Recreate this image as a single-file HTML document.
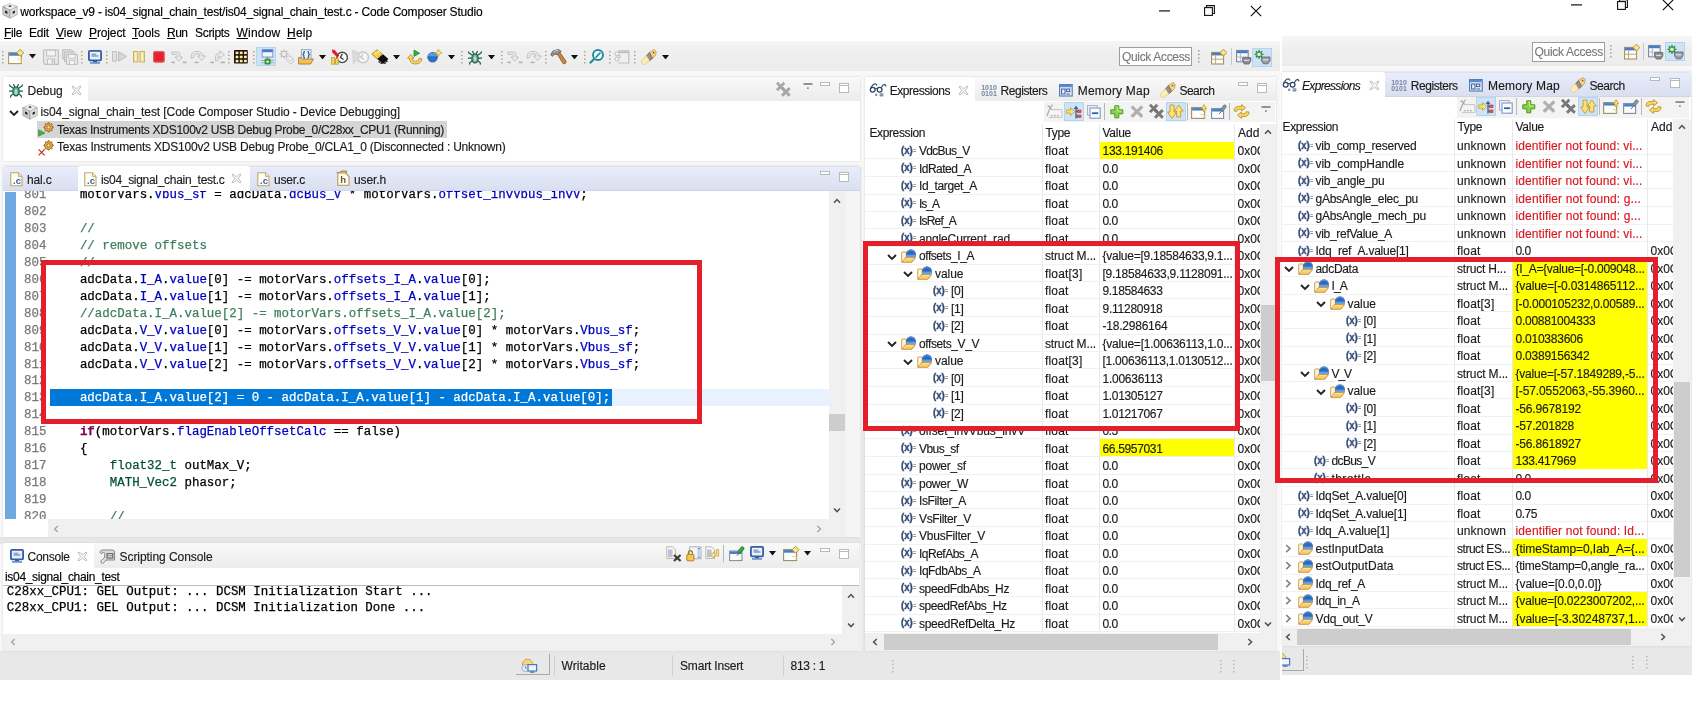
<!DOCTYPE html>
<html lang="en"><head><meta charset="utf-8"><title>workspace_v9 - Code Composer Studio</title>
<style>
html,body{margin:0;padding:0;background:#fff}
body{width:1697px;height:702px;position:relative;overflow:hidden;font-family:"Liberation Sans",sans-serif;font-size:12px;color:#1b1b1b}
div,span,svg,section,header,footer,nav,main{position:absolute;display:block}
#app{left:0;top:0;width:1697px;height:702px;will-change:transform}
.t{white-space:pre;line-height:16px;font-family:"Liberation Sans",sans-serif;font-size:12px;-webkit-text-stroke:0.15px}
.m{white-space:pre;line-height:16px;font-family:"Liberation Mono",monospace;font-size:12.45px;-webkit-text-stroke:0.25px}
.tabbar{background:linear-gradient(#f9f9f9,#ececec);border-radius:4px 4px 0 0}
.tabbar.act{background:linear-gradient(#e9edfc,#d9dff0);box-shadow:inset 0 -1px 0 #cfd5e4,inset 0 1px 0 #dfe2ea}
.tab{background:#fff;border-radius:3px 3px 0 0}
.hl{background:#cde4f7;outline:1px solid #b5d3ee;outline-offset:-1px}
.gl{background:#efefef}
.cl{background:#e3e3e3}
.yl{background:#ffff00}
.sb{background:#f0f0f0}
.th{background:#cdcdcd}
.red{border:5px solid #e21f2b;box-sizing:border-box}

</style></head>
<body>
<div id="app">
<section aria-label="Window frames" style="left:0;top:0">
<main style="left:0;top:0;width:1280px;height:680px;background:#f8f8f8">
<header style="left:0;top:0;width:1280px;height:41px;background:#fff"></header>
<nav style="left:0;top:41px;width:1280px;height:30px;background:linear-gradient(#f5f5f5,#efefef 40%,#ececec)"></nav>
<footer style="left:0;top:651px;width:1280px;height:29px;background:#e8e8e8"></footer>
</main>
<main style="left:1282px;top:0;width:410px;height:675px;background:#f7f7f7">
<header style="left:0;top:0;width:410px;height:36px;background:#fff"></header>
<nav style="left:0;top:36px;width:410px;height:30px;background:linear-gradient(#f5f5f5,#efefef 40%,#ececec)"></nav>
<footer style="left:0;top:645px;width:410px;height:30px;background:#e8e8e8"></footer>
</main>
</section>
<section aria-label="View containers" style="left:0;top:0">
<div style="left:0px;top:537px;width:861px;height:6.5px;background:#e7e7e7;"></div>
<div style="left:861px;top:430px;width:4px;height:221px;background:#e9e9e9;"></div>
<div style="left:860px;top:166px;width:2px;height:264px;background:#ededed;"></div>
<div style="left:3px;top:77px;width:857px;height:84px;background:#fff;box-shadow:0 0 2px #d0d0d0;"></div>
<div class="tabbar" style="left:3px;top:77px;width:857px;height:24px"></div>
<div class="tab" style="left:3px;top:77px;width:85px;height:24px"></div>
<div style="left:37px;top:121px;width:410px;height:17px;background:#d5d5d5;"></div>
<div style="left:3px;top:165.5px;width:857px;height:371.5px;background:#fff;box-shadow:0 0 2px #d0d0d0;"></div>
<div class="tabbar act" style="left:3px;top:165.5px;width:857px;height:25px"></div>
<div class="tab" style="left:78px;top:166px;width:172px;height:25px"></div>
<div style="left:5px;top:192px;width:11px;height:327px;background:#70a9e0;"></div>
<div style="left:50px;top:389px;width:779px;height:17px;background:#e8f2fe;"></div>
<div style="left:50px;top:389px;width:562px;height:17px;background:#0078d7;"></div>
<div style="left:829px;top:191px;width:17px;height:328px;background:#f0f0f0;"></div>
<div style="left:829px;top:414px;width:16px;height:17px;background:#cdcdcd;"></div>
<div style="left:48px;top:519px;width:798px;height:18px;background:#f0f0f0;"></div>
<div style="left:846px;top:191px;width:14px;height:346px;background:#f5f5f5;"></div>
<div style="left:3px;top:543px;width:856px;height:108px;background:#fff;box-shadow:0 0 2px #d0d0d0;"></div>
<div class="tabbar" style="left:3px;top:543px;width:856px;height:25px"></div>
<div class="tab" style="left:3px;top:543px;width:91px;height:25px"></div>
<div style="left:3px;top:585px;width:856px;height:1px;background:#b9b9b9;"></div>
<div style="left:842px;top:586px;width:17px;height:48px;background:#f0f0f0;"></div>
<div style="left:3px;top:634px;width:856px;height:17px;background:#f0f0f0;"></div>
<div style="left:865px;top:77px;width:411px;height:574px;background:#fff;box-shadow:0 0 2px #d0d0d0;"></div>
<div class="tabbar" style="left:865px;top:77px;width:411px;height:24px"></div>
<div class="tab" style="left:865px;top:77px;width:110px;height:24px"></div>
<div style="left:1282px;top:72px;width:409px;height:573.5px;background:#fff;box-shadow:0 0 2px #d0d0d0;"></div>
<div class="tabbar act" style="left:1282px;top:72px;width:409px;height:25px"></div>
<div class="tab" style="left:1282px;top:72px;width:103px;height:25px"></div>
</section>
<section aria-label="Title bar, menu bar and toolbars" style="left:0;top:0">
<svg style="left:1.5px;top:3px" width="16" height="16" viewBox="0 0 16 16"><path d="M8 0.6 L15.2 3.6 L8 7 L0.8 3.6 Z" fill="#e9e9e9" stroke="#9a9a9a" stroke-width="0.6"/><path d="M0.8 3.6 L8 7 V15.2 L0.8 11.6 Z" fill="#c9c9c9" stroke="#8f8f8f" stroke-width="0.6"/><path d="M15.2 3.6 L8 7 V15.2 L15.2 11.6 Z" fill="#dedede" stroke="#9a9a9a" stroke-width="0.6"/><path d="M6.2 3 L8 2.2 L9.8 3 L8 3.9 Z" fill="#222"/><path d="M3 7.4 L5.4 8.6 V11 L3 9.8 Z" fill="#222"/><path d="M10.6 8.6 L13 7.4 V9.8 L10.6 11 Z" fill="#2a2a2a"/><path d="M4.4 2.6 L8 1 L11.6 2.6 M4.4 4.6 L8 6 L11.6 4.6" fill="none" stroke="#fff" stroke-width="0.7" opacity=".8"/></svg>
<span class="t" style="left:20.3px;top:3.90px;color:#000;letter-spacing:-0.189px;">workspace_v9 - is04_signal_chain_test/is04_signal_chain_test.c - Code Composer Studio</span>
<svg style="left:1158.5px;top:10px" width="11" height="2" viewBox="0 0 11 2"><rect x="0" y="0.3" width="11" height="1.2" fill="#111"/></svg><svg style="left:1203.5px;top:5px" width="11" height="11" viewBox="0 0 11 11"><path d="M2.5 2.5 V0.6 H10.4 V8.5 H8.5" fill="none" stroke="#111" stroke-width="1.1"/><rect x="0.6" y="2.6" width="7.8" height="7.8" fill="none" stroke="#111" stroke-width="1.1"/></svg><svg style="left:1250px;top:5px" width="12" height="12" viewBox="0 0 12 12"><path d="M0.8 0.8 L11.2 11.2 M11.2 0.8 L0.8 11.2" stroke="#111" stroke-width="1.2"/></svg>
<svg style="left:1571.0px;top:4px" width="11" height="2" viewBox="0 0 11 2"><rect x="0" y="0.3" width="11" height="1.2" fill="#111"/></svg><svg style="left:1616.5px;top:-1px" width="11" height="11" viewBox="0 0 11 11"><path d="M2.5 2.5 V0.6 H10.4 V8.5 H8.5" fill="none" stroke="#111" stroke-width="1.1"/><rect x="0.6" y="2.6" width="7.8" height="7.8" fill="none" stroke="#111" stroke-width="1.1"/></svg><svg style="left:1662px;top:-1px" width="12" height="12" viewBox="0 0 12 12"><path d="M0.8 0.8 L11.2 11.2 M11.2 0.8 L0.8 11.2" stroke="#111" stroke-width="1.2"/></svg>
<span class="t" style="left:4px;top:24.60px;color:#000;letter-spacing:-0.336px;"><u>F</u>ile</span>
<span class="t" style="left:29px;top:24.60px;color:#000;letter-spacing:-0.172px;">Edit</span>
<span class="t" style="left:56px;top:24.60px;color:#000;letter-spacing:0.051px;"><u>V</u>iew</span>
<span class="t" style="left:89px;top:24.60px;color:#000;letter-spacing:-0.123px;"><u>P</u>roject</span>
<span class="t" style="left:132px;top:24.60px;color:#000;"><u>T</u>ools</span>
<span class="t" style="left:167px;top:24.60px;color:#000;letter-spacing:-0.505px;"><u>R</u>un</span>
<span class="t" style="left:195px;top:24.60px;color:#000;letter-spacing:-0.312px;">Scripts</span>
<span class="t" style="left:236.5px;top:24.60px;color:#000;letter-spacing:0.219px;"><u>W</u>indow</span>
<span class="t" style="left:287px;top:24.60px;color:#000;letter-spacing:0.203px;"><u>H</u>elp</span>
<svg style="left:1.5999999999999999px;top:50.5px" width="2" height="13" viewBox="0 0 2 13"><rect x="0" y="0.0" width="1.6" height="1.4" fill="#a8a8a8"/><rect x="0" y="3.7" width="1.6" height="1.4" fill="#a8a8a8"/><rect x="0" y="7.4" width="1.6" height="1.4" fill="#a8a8a8"/><rect x="0" y="11.1" width="1.6" height="1.4" fill="#a8a8a8"/></svg><svg style="left:7.8px;top:49.0px" width="16" height="16" viewBox="0 0 16 16"><rect x="0.6" y="3.6" width="12.8" height="11" fill="#fdfdfd" stroke="#b09a62" stroke-width="1.1"/><rect x="1.1" y="4.1" width="11.8" height="2.6" fill="#3f7fc4"/><path d="M9 10 H13 V14" fill="none" stroke="#ecd58a" stroke-width="1"/><path d="M12.2 0.3 L15.7 3.8 L12.2 7.3 L8.7 3.8 Z" fill="#fbe58a" stroke="#b08a28" stroke-width="0.9"/></svg><svg style="left:29px;top:54.0px" width="7" height="4.5" viewBox="0 0 7 4.5"><path d="M0 0 H7 L3.5 4.5 Z" fill="#111"/></svg><svg style="left:42.5px;top:49.0px" width="16" height="16" viewBox="0 0 16 16"><path d="M0.6 1 H15.4 V15.4 H2.2 L0.6 13.8 Z" fill="#e9e9e9" stroke="#bdbdbd" stroke-width="1.1"/><rect x="3.6" y="1.2" width="8.8" height="5.8" fill="#f4f4f4" stroke="#bdbdbd" stroke-width="0.9"/><rect x="4.6" y="10" width="7" height="5.2" fill="#f4f4f4" stroke="#bdbdbd" stroke-width="0.9"/><rect x="8.6" y="11" width="1.8" height="3.4" fill="#bdbdbd"/></svg><svg style="left:62px;top:49.0px" width="16" height="16" viewBox="0 0 16 16"><path d="M0.6 0.8 H9.6 L12.6 3.6 V10 H0.6 Z" fill="#e2e2e2" stroke="#bdbdbd"/><path d="M2.4 3 H11.4 L14.2 5.8 V12.4 H2.4 Z" fill="#dedede" stroke="#bdbdbd"/><path d="M4.4 5.4 H15.4 V15.4 H4.4 Z" fill="#e9e9e9" stroke="#bdbdbd"/><rect x="6.6" y="5.6" width="6.6" height="3.6" fill="#f5f5f5" stroke="#bdbdbd" stroke-width="0.8"/><rect x="7.4" y="11.4" width="5" height="4" fill="#f5f5f5" stroke="#bdbdbd" stroke-width="0.8"/></svg><svg style="left:80.8px;top:50.5px" width="2" height="13" viewBox="0 0 2 13"><rect x="0" y="0.0" width="1.6" height="1.4" fill="#b3a58a"/><rect x="0" y="3.7" width="1.6" height="1.4" fill="#b3a58a"/><rect x="0" y="7.4" width="1.6" height="1.4" fill="#b3a58a"/><rect x="0" y="11.1" width="1.6" height="1.4" fill="#b3a58a"/></svg><svg style="left:87.8px;top:49.5px" width="14" height="14" viewBox="0 0 14 14"><rect x="0.9" y="0.9" width="12.2" height="9.4" rx="1" fill="#e9eef8" stroke="#2f5fa8" stroke-width="1.8"/><rect x="3.6" y="3.6" width="4.6" height="1.8" fill="#8ea2c6"/><rect x="3.6" y="5.2" width="6.8" height="1.6" fill="#8ea2c6"/><rect x="5" y="11" width="4" height="1.4" fill="#2f5fa8"/><rect x="2" y="12.2" width="10" height="1.5" fill="#5b87c8"/></svg><svg style="left:105.7px;top:50.5px" width="2" height="13" viewBox="0 0 2 13"><rect x="0" y="0.0" width="1.6" height="1.4" fill="#b3a58a"/><rect x="0" y="3.7" width="1.6" height="1.4" fill="#b3a58a"/><rect x="0" y="7.4" width="1.6" height="1.4" fill="#b3a58a"/><rect x="0" y="11.1" width="1.6" height="1.4" fill="#b3a58a"/></svg><svg style="left:112px;top:51.0px" width="16" height="11" viewBox="0 0 16 11"><rect x="0.6" y="0.6" width="3.6" height="9.6" fill="#e6e6e6" stroke="#bdbdbd"/><path d="M6.4 0.6 L14.6 5.4 L6.4 10.2 Z" fill="#d6d6d6" stroke="#bdbdbd"/></svg><svg style="left:133px;top:51.0px" width="12" height="11.5" viewBox="0 0 12 11.5"><rect x="0.5" y="0.5" width="4.4" height="10.4" fill="#f1e39a" stroke="#c8b060"/><rect x="7" y="0.5" width="4.4" height="10.4" fill="#f1e39a" stroke="#c8b060"/><rect x="2" y="1.2" width="1.4" height="9" fill="#fbf4c8"/><rect x="8.5" y="1.2" width="1.4" height="9" fill="#fbf4c8"/></svg><svg style="left:152.8px;top:50.7px" width="12" height="12" viewBox="0 0 12 12"><rect x="0.6" y="0.6" width="10.6" height="10.6" rx="1.4" fill="#e8202c" stroke="#d8636a" stroke-width="1.2"/></svg><svg style="left:170.5px;top:50.0px" width="16" height="14" viewBox="0 0 16 14"><path d="M1 2 H6.5 Q9 2 9 5 V7 H11.6 L7.8 11.4 L4 7 H6.6 V5 Q6.6 4.4 6 4.4 H1 Z" fill="#ececec" stroke="#bdbdbd" stroke-width="0.9"/><rect x="0.4" y="11.6" width="3.4" height="1.6" fill="#b0b0b0"/><rect x="11.6" y="11.6" width="3.8" height="1.6" fill="#b0b0b0"/></svg><svg style="left:190px;top:50.0px" width="16" height="14" viewBox="0 0 16 14"><path d="M1 8 Q1 1.4 7 1.4 Q12.4 1.4 12.6 6 H15.4 L11.6 10.6 L7.6 6 H10.2 Q10 3.8 7 3.8 Q3.6 3.8 3.6 8 Z" fill="#ececec" stroke="#bdbdbd" stroke-width="0.9"/><rect x="4.6" y="11.6" width="4" height="1.6" fill="#b0b0b0"/></svg><svg style="left:209.5px;top:50.0px" width="16" height="14" viewBox="0 0 16 14"><path d="M5.6 11 V6.6 Q5.6 3.4 8.6 3.4 H9.8 V0.8 L14.4 4.6 L9.8 8.6 V6 H8.8 Q8 6 8 7 V11 Z" fill="#ececec" stroke="#bdbdbd" stroke-width="0.9"/><rect x="0.4" y="11.6" width="3.6" height="1.6" fill="#b0b0b0"/><rect x="10.6" y="11.6" width="4.4" height="1.6" fill="#b0b0b0"/></svg><svg style="left:227.89999999999998px;top:50.5px" width="2" height="13" viewBox="0 0 2 13"><rect x="0" y="0.0" width="1.6" height="1.4" fill="#b3a58a"/><rect x="0" y="3.7" width="1.6" height="1.4" fill="#b3a58a"/><rect x="0" y="7.4" width="1.6" height="1.4" fill="#b3a58a"/><rect x="0" y="11.1" width="1.6" height="1.4" fill="#b3a58a"/></svg><svg style="left:233.6px;top:49.5px" width="14" height="14" viewBox="0 0 14 14"><rect x="0" y="0" width="13.8" height="13.6" rx="0.8" fill="#1d1308"/><rect x="1.6" y="1.6" width="2.8" height="2.5" fill="#fde9a8"/><rect x="1.6" y="5.7" width="2.8" height="2.5" fill="#fde9a8"/><rect x="1.6" y="9.8" width="2.8" height="2.5" fill="#fde9a8"/><rect x="5.8" y="1.6" width="2.8" height="2.5" fill="#fde9a8"/><rect x="5.8" y="5.7" width="2.8" height="2.5" fill="#fde9a8"/><rect x="5.8" y="9.8" width="2.8" height="2.5" fill="#fde9a8"/><rect x="10.0" y="1.6" width="2.8" height="2.5" fill="#fde9a8"/><rect x="10.0" y="5.7" width="2.8" height="2.5" fill="#fde9a8"/><rect x="10.0" y="9.8" width="2.8" height="2.5" fill="#fde9a8"/></svg><svg style="left:252.7px;top:50.5px" width="2" height="13" viewBox="0 0 2 13"><rect x="0" y="0.0" width="1.6" height="1.4" fill="#b3a58a"/><rect x="0" y="3.7" width="1.6" height="1.4" fill="#b3a58a"/><rect x="0" y="7.4" width="1.6" height="1.4" fill="#b3a58a"/><rect x="0" y="11.1" width="1.6" height="1.4" fill="#b3a58a"/></svg><div class="hl" style="left:256px;top:46.7px;width:20px;height:19px"></div><svg style="left:260.6px;top:49.0px" width="13" height="16" viewBox="0 0 13 16"><rect x="1.2" y="0.6" width="10.6" height="7.4" fill="#f2f6fc" stroke="#7d9ccc" stroke-width="1"/><rect x="1.2" y="0.6" width="10.6" height="2.6" fill="#4a7cc4"/><rect x="5.4" y="8" width="2.2" height="2.4" fill="#8e9cb4"/><rect x="0" y="11" width="13" height="1" fill="#a8a8a8"/><rect x="0" y="13.2" width="13" height="1" fill="#c0a8a8"/><rect x="3.6" y="9.8" width="6" height="5.8" rx="1" fill="#2c9a3c"/><rect x="5.4" y="11.6" width="2.4" height="2.2" fill="#d8f5c8"/></svg><svg style="left:278.6px;top:48.5px" width="16" height="16" viewBox="0 0 16 16"><path d="M5 5 L9.6 5.0" stroke="#bdbdbd" stroke-width="1.3"/><path d="M5 5 L0.4 5.0" stroke="#bdbdbd" stroke-width="1.3"/><path d="M5 5 L5.0 9.6" stroke="#bdbdbd" stroke-width="1.3"/><path d="M5 5 L5.0 0.4" stroke="#bdbdbd" stroke-width="1.3"/><path d="M5 5 L8.2 8.2" stroke="#bdbdbd" stroke-width="1.3"/><path d="M5 5 L1.8 8.2" stroke="#bdbdbd" stroke-width="1.3"/><path d="M5 5 L8.2 1.8" stroke="#bdbdbd" stroke-width="1.3"/><path d="M5 5 L1.8 1.8" stroke="#bdbdbd" stroke-width="1.3"/><circle cx="5" cy="5" r="2.6" fill="#f0f0f0" stroke="#bdbdbd"/><path d="M7.6 7.2 L11.4 7 L15.2 11.8 L11.8 15 L7.4 10.8 Z" fill="#f2f2f2" stroke="#c2c2c2"/><path d="M9.6 10.2 L11.4 12 L13.4 10.4" fill="none" stroke="#c2c2c2"/></svg><svg style="left:297.6px;top:48.5px" width="16" height="16" viewBox="0 0 16 16"><rect x="3.4" y="0.6" width="9.6" height="10" fill="#eef2f8" stroke="#9aa6b8"/><path d="M7 2.4 Q5.8 2.4 5.8 3.6 V4.8 L5 5.6 L5.8 6.4 V7.8 Q5.8 9 7 9" fill="none" stroke="#1f6a9c" stroke-width="1.3"/><path d="M9.4 2.4 Q10.6 2.4 10.6 3.6 V4.8 L11.4 5.6 L10.6 6.4 V7.8 Q10.6 9 9.4 9" fill="none" stroke="#1f6a9c" stroke-width="1.3"/><path d="M0.6 8.6 H3 L4 10 H15.4 L12.6 15 H0.6 Z" fill="#f3bf5c" stroke="#b8822e" stroke-linejoin="round"/></svg><svg style="left:319px;top:54.5px" width="7" height="4.5" viewBox="0 0 7 4.5"><path d="M0 0 H7 L3.5 4.5 Z" fill="#111"/></svg><svg style="left:331px;top:48.5px" width="17" height="16" viewBox="0 0 17 16"><circle cx="11.2" cy="8.4" r="5.2" fill="#fafafa" stroke="#4a4a4a" stroke-width="1.4"/><path d="M11.4 4.8 L9.4 8.6 L12.6 10.6" fill="none" stroke="#333" stroke-width="1.2"/><path d="M1 0.6 L3.6 1 L8.4 6.6 L6.4 8.6 L1.4 3.4 Z" fill="#e0182c"/><rect x="0.6" y="8.4" width="2.8" height="6.8" fill="#f4d668" stroke="#c09a28" stroke-width="0.8"/><rect x="4.4" y="9.6" width="2.8" height="5.6" fill="#f4d668" stroke="#c09a28" stroke-width="0.8"/></svg><svg style="left:351.6px;top:48.5px" width="17" height="16" viewBox="0 0 17 16"><circle cx="11" cy="8.4" r="5.4" fill="#f6f6f6" stroke="#c6c6c6" stroke-width="1.3"/><path d="M11 4.8 L9 8.6 L12.4 10.6" fill="none" stroke="#c6c6c6" stroke-width="1.2"/><path d="M0.6 1.4 L4.6 2.4 L9 8 L6.4 9.6 L7.4 13 L3.6 11.4 L1.6 15 L1 9 Z" fill="#dadada" stroke="#c8c8c8" stroke-width="0.6"/></svg><svg style="left:371px;top:48.5px" width="18" height="16" viewBox="0 0 18 16"><path d="M0.8 5 L6 0.8 L11.6 5.4 L6.2 10 Z" fill="#f3cf4e" stroke="#b88e1c" stroke-width="0.9"/><path d="M4 3.6 L5.4 5 M6.6 2 L8.4 3.8" stroke="#fff4b8" stroke-width="1.2"/><path d="M6.4 10 L12 5.2 L17.4 10 L12 15 Z" fill="#0c0c0c"/><path d="M7.6 12.4 L8.8 13.6 M9.6 13.6 L10.8 14.8 M13.4 14.8 L14.6 13.6 M15.2 13 L16.4 11.8" stroke="#0c0c0c" stroke-width="1.3"/></svg><svg style="left:393.3px;top:54.5px" width="7" height="4.5" viewBox="0 0 7 4.5"><path d="M0 0 H7 L3.5 4.5 Z" fill="#111"/></svg><svg style="left:406.8px;top:48.5px" width="16" height="16" viewBox="0 0 16 16"><path d="M7 1 L12.6 4.2 L7 7.4 Z" fill="#2fae4a" stroke="#1d8a36" stroke-width="0.8"/><path d="M3.8 5.4 L7 9.2 H5 Q5.4 12.4 8.6 12.4 Q12 12.4 12.6 9 L15 10 Q13.8 15 8.4 15 Q3 15 2.4 9.2 H0.6 Z" fill="#f7d36a" stroke="#c2912a" stroke-width="0.9" stroke-linejoin="round"/></svg><svg style="left:427.2px;top:48.9px" width="15" height="14" viewBox="0 0 15 14"><circle cx="5.6" cy="8.2" r="5.2" fill="#2f6fc4"/><ellipse cx="5.4" cy="6.6" rx="4.6" ry="2.6" fill="#5a9ae4"/><rect x="0.6" y="7.6" width="10" height="1" fill="#1d4f9c"/><path d="M11.4 0.2 L12.6 2.6 L15 3.8 L12.6 5 L11.4 7.4 L10.2 5 L7.8 3.8 L10.2 2.6 Z" fill="#fbe27a" stroke="#c79a2a" stroke-width="0.7"/></svg><svg style="left:447.6px;top:54.5px" width="7" height="4.5" viewBox="0 0 7 4.5"><path d="M0 0 H7 L3.5 4.5 Z" fill="#111"/></svg><svg style="left:460.8px;top:50.5px" width="2" height="13" viewBox="0 0 2 13"><rect x="0" y="0.0" width="1.6" height="1.4" fill="#b3a58a"/><rect x="0" y="3.7" width="1.6" height="1.4" fill="#b3a58a"/><rect x="0" y="7.4" width="1.6" height="1.4" fill="#b3a58a"/><rect x="0" y="11.1" width="1.6" height="1.4" fill="#b3a58a"/></svg><svg style="left:467.2px;top:49.5px" width="16" height="15" viewBox="0 0 16 15"><path d="M5.8 5.6 L2 3 L1.4 1.6 M5 8 L1 8 M5.6 10.4 L2.6 13 L2.8 14.6 M10.2 5.6 L14 3 L14.6 1.6 M11 8 L15 8 M10.4 10.4 L13.4 13 L13.2 14.6 M6.8 4 L5.4 1 M9.2 4 L10.6 1" fill="none" stroke="#1f5f58" stroke-width="1.25"/><ellipse cx="8" cy="8.4" rx="3.1" ry="4.5" fill="#6fb487" stroke="#1f5f58" stroke-width="1.3"/><ellipse cx="8" cy="8.8" rx="1.4" ry="2.5" fill="#b6e0a8"/></svg><svg style="left:488px;top:54.5px" width="7" height="4.5" viewBox="0 0 7 4.5"><path d="M0 0 H7 L3.5 4.5 Z" fill="#111"/></svg><svg style="left:500.7px;top:50.5px" width="2" height="13" viewBox="0 0 2 13"><rect x="0" y="0.0" width="1.6" height="1.4" fill="#b3a58a"/><rect x="0" y="3.7" width="1.6" height="1.4" fill="#b3a58a"/><rect x="0" y="7.4" width="1.6" height="1.4" fill="#b3a58a"/><rect x="0" y="11.1" width="1.6" height="1.4" fill="#b3a58a"/></svg><svg style="left:506.5px;top:50.0px" width="16" height="14" viewBox="0 0 16 14"><path d="M1 2 H6.5 Q9 2 9 5 V7 H11.6 L7.8 11.4 L4 7 H6.6 V5 Q6.6 4.4 6 4.4 H1 Z" fill="#ececec" stroke="#bdbdbd" stroke-width="0.9"/><rect x="0.4" y="11.6" width="3.4" height="1.6" fill="#b0b0b0"/><rect x="11.6" y="11.6" width="3.8" height="1.6" fill="#b0b0b0"/></svg><svg style="left:526px;top:50.0px" width="16" height="14" viewBox="0 0 16 14"><path d="M1 8 Q1 1.4 7 1.4 Q12.4 1.4 12.6 6 H15.4 L11.6 10.6 L7.6 6 H10.2 Q10 3.8 7 3.8 Q3.6 3.8 3.6 8 Z" fill="#ececec" stroke="#bdbdbd" stroke-width="0.9"/><rect x="4.6" y="11.6" width="4" height="1.6" fill="#b0b0b0"/></svg><svg style="left:544.8000000000001px;top:50.5px" width="2" height="13" viewBox="0 0 2 13"><rect x="0" y="0.0" width="1.6" height="1.4" fill="#b3a58a"/><rect x="0" y="3.7" width="1.6" height="1.4" fill="#b3a58a"/><rect x="0" y="7.4" width="1.6" height="1.4" fill="#b3a58a"/><rect x="0" y="11.1" width="1.6" height="1.4" fill="#b3a58a"/></svg><svg style="left:549.6px;top:48.5px" width="17" height="16" viewBox="0 0 17 16"><path d="M7 4.6 L9.6 3 L16 12.2 Q16.4 14.6 14 14.8 Q12.8 14.8 12.4 13.6 Z" fill="#c98544" stroke="#8a5622" stroke-width="0.8"/><path d="M0.6 5.6 L3.2 1.8 L9 0.4 L11.2 2.6 L9.6 3.6 L7.4 5.6 L4.2 5.4 L2.4 7.4 Z" fill="#8e9094" stroke="#5c5e62" stroke-width="0.8"/><path d="M3.6 2.4 L8.4 1.2" stroke="#c8cacc" stroke-width="1"/></svg><svg style="left:571px;top:54.5px" width="7" height="4.5" viewBox="0 0 7 4.5"><path d="M0 0 H7 L3.5 4.5 Z" fill="#111"/></svg><svg style="left:583.9000000000001px;top:50.5px" width="2" height="13" viewBox="0 0 2 13"><rect x="0" y="0.0" width="1.6" height="1.4" fill="#b3a58a"/><rect x="0" y="3.7" width="1.6" height="1.4" fill="#b3a58a"/><rect x="0" y="7.4" width="1.6" height="1.4" fill="#b3a58a"/><rect x="0" y="11.1" width="1.6" height="1.4" fill="#b3a58a"/></svg><svg style="left:589px;top:49.1px" width="16" height="15" viewBox="0 0 16 15"><circle cx="9" cy="6" r="5" fill="#fafcfc" stroke="#1f8a9c" stroke-width="1.9"/><path d="M5.4 9.8 L0.8 14.2" stroke="#1f8a9c" stroke-width="2.2"/><path d="M6.6 8.6 L11.4 3.6" stroke="#1f8a9c" stroke-width="1.6"/></svg><svg style="left:608.9000000000001px;top:50.5px" width="2" height="13" viewBox="0 0 2 13"><rect x="0" y="0.0" width="1.6" height="1.4" fill="#b3a58a"/><rect x="0" y="3.7" width="1.6" height="1.4" fill="#b3a58a"/><rect x="0" y="7.4" width="1.6" height="1.4" fill="#b3a58a"/><rect x="0" y="11.1" width="1.6" height="1.4" fill="#b3a58a"/></svg><svg style="left:613.6px;top:49.5px" width="16" height="14" viewBox="0 0 16 14"><path d="M4.4 0.8 H14.8 V13 H4.4" fill="#f0f0f0" stroke="#bdbdbd" stroke-width="1.2"/><path d="M4 2.4 H14.8" stroke="#bdbdbd" stroke-width="1.6"/><circle cx="3" cy="3.8" r="2" fill="#f6f6f6" stroke="#bdbdbd"/><circle cx="3" cy="9" r="2" fill="#f6f6f6" stroke="#bdbdbd"/><path d="M4.6 5 L7 6.4 L4.6 7.8" fill="none" stroke="#bdbdbd"/></svg><svg style="left:633.7px;top:50.5px" width="2" height="13" viewBox="0 0 2 13"><rect x="0" y="0.0" width="1.6" height="1.4" fill="#b3a58a"/><rect x="0" y="3.7" width="1.6" height="1.4" fill="#b3a58a"/><rect x="0" y="7.4" width="1.6" height="1.4" fill="#b3a58a"/><rect x="0" y="11.1" width="1.6" height="1.4" fill="#b3a58a"/></svg><svg style="left:639.6px;top:48.5px" width="17" height="16" viewBox="0 0 17 16"><path d="M9.4 3.4 L14 0.6 L16.2 2.4 L15.6 6.4 L12.6 9.4 Z" fill="#f6d58a" stroke="#c8963c" stroke-width="0.8"/><circle cx="13.6" cy="3.6" r="0.9" fill="#7a5a2a"/><path d="M6.4 6.8 L9.4 3.4 L12.6 9.4 L9.6 12 Z" fill="#9a8e8a" stroke="#74685e" stroke-width="0.8"/><path d="M1.6 11.8 L6.4 6.8 L9.6 12 L4.6 15.6 Q2.6 15.8 1.6 14 Z" fill="#fbeeb8" stroke="#e6c87a" stroke-width="0.8"/></svg><svg style="left:661.5px;top:54.5px" width="7" height="4.5" viewBox="0 0 7 4.5"><path d="M0 0 H7 L3.5 4.5 Z" fill="#111"/></svg>
<div style="left:1119px;top:46.5px;width:73px;height:19.5px;background:#fff;border:1px solid #9d9d9d;box-sizing:border-box;"></div>
<span class="t" style="left:1122px;top:48.60px;color:#7a7a7a;letter-spacing:-0.336px;">Quick Access</span>
<svg style="left:1197.7px;top:50px" width="2" height="13" viewBox="0 0 2 13"><rect x="0" y="0.0" width="1.6" height="1.4" fill="#9c9c9c"/><rect x="0" y="3.7" width="1.6" height="1.4" fill="#9c9c9c"/><rect x="0" y="7.4" width="1.6" height="1.4" fill="#9c9c9c"/><rect x="0" y="11.1" width="1.6" height="1.4" fill="#9c9c9c"/></svg>
<svg style="left:1211px;top:49px" width="16" height="16" viewBox="0 0 16 16"><rect x="0.6" y="3.4" width="12" height="11.6" fill="#fdfdf6" stroke="#9a8a5a"/><rect x="1" y="3.8" width="11.2" height="2.6" fill="#4a7cc4"/><path d="M4.6 6.4 V15 M0.6 10.2 H12.6" stroke="#b0a070" stroke-width="0.9"/><path d="M12.4 0.2 L15.8 3.6 L12.4 7 L9 3.6 Z" fill="#fbe58a" stroke="#b08a28" stroke-width="0.9"/></svg>
<div style="left:1231px;top:48px;width:1px;height:17px;background:#c9c9c9;"></div>
<svg style="left:1236px;top:49px" width="16" height="16" viewBox="0 0 16 16"><rect x="0.6" y="1.4" width="11.6" height="11.4" fill="#f6f8fc" stroke="#70809a"/><rect x="1" y="1.8" width="10.8" height="2.4" fill="#4a7cc4"/><path d="M4.4 4.2 V12.8 M0.6 8 H12" stroke="#a8b0c0" stroke-width="0.9"/><path d="M6.6 8.6 H14.8 V12 L13 15 H8.4 L6.6 12 Z" fill="#8a8e96" stroke="#5a5e66" stroke-width="0.8"/><path d="M8 11.4 H13.4" stroke="#d8dade" stroke-width="1.2"/></svg>
<div class="hl" style="left:1252px;top:47.5px;width:20px;height:19px"></div>
<svg style="left:1254px;top:49px" width="17" height="16" viewBox="0 0 17 16"><path d="M5 5.4 L9.4 5.4" stroke="#2a8a3a" stroke-width="1.5"/><path d="M5 5.4 L0.6 5.4" stroke="#2a8a3a" stroke-width="1.5"/><path d="M5 5.4 L5.0 9.8" stroke="#2a8a3a" stroke-width="1.5"/><path d="M5 5.4 L5.0 1.0" stroke="#2a8a3a" stroke-width="1.5"/><path d="M5 5.4 L8.1 8.5" stroke="#2a8a3a" stroke-width="1.5"/><path d="M5 5.4 L1.9 8.5" stroke="#2a8a3a" stroke-width="1.5"/><path d="M5 5.4 L8.1 2.3" stroke="#2a8a3a" stroke-width="1.5"/><path d="M5 5.4 L1.9 2.3" stroke="#2a8a3a" stroke-width="1.5"/><circle cx="5" cy="5.4" r="2.4" fill="#d8f0c0" stroke="#2a8a3a"/><path d="M7.4 8 H16 V11.4 L14 14.8 H9.4 L7.4 11.4 Z" fill="#9a9ea6" stroke="#5a5e66" stroke-width="0.8"/><path d="M9 10.8 H14.4" stroke="#e0e2e6" stroke-width="1.2"/></svg>
<div style="left:1532px;top:42px;width:73px;height:19.5px;background:#fff;border:1px solid #9d9d9d;box-sizing:border-box;"></div>
<span class="t" style="left:1534.5px;top:44.20px;color:#7a7a7a;letter-spacing:-0.294px;">Quick Access</span>
<svg style="left:1610.2px;top:45px" width="2" height="13" viewBox="0 0 2 13"><rect x="0" y="0.0" width="1.6" height="1.4" fill="#9c9c9c"/><rect x="0" y="3.7" width="1.6" height="1.4" fill="#9c9c9c"/><rect x="0" y="7.4" width="1.6" height="1.4" fill="#9c9c9c"/><rect x="0" y="11.1" width="1.6" height="1.4" fill="#9c9c9c"/></svg>
<svg style="left:1624px;top:44px" width="16" height="16" viewBox="0 0 16 16"><rect x="0.6" y="3.4" width="12" height="11.6" fill="#fdfdf6" stroke="#9a8a5a"/><rect x="1" y="3.8" width="11.2" height="2.6" fill="#4a7cc4"/><path d="M4.6 6.4 V15 M0.6 10.2 H12.6" stroke="#b0a070" stroke-width="0.9"/><path d="M12.4 0.2 L15.8 3.6 L12.4 7 L9 3.6 Z" fill="#fbe58a" stroke="#b08a28" stroke-width="0.9"/></svg>
<div style="left:1643px;top:43px;width:1px;height:17px;background:#c9c9c9;"></div>
<svg style="left:1648px;top:44px" width="16" height="16" viewBox="0 0 16 16"><rect x="0.6" y="1.4" width="11.6" height="11.4" fill="#f6f8fc" stroke="#70809a"/><rect x="1" y="1.8" width="10.8" height="2.4" fill="#4a7cc4"/><path d="M4.4 4.2 V12.8 M0.6 8 H12" stroke="#a8b0c0" stroke-width="0.9"/><path d="M6.6 8.6 H14.8 V12 L13 15 H8.4 L6.6 12 Z" fill="#8a8e96" stroke="#5a5e66" stroke-width="0.8"/><path d="M8 11.4 H13.4" stroke="#d8dade" stroke-width="1.2"/></svg>
<div class="hl" style="left:1665px;top:42px;width:20px;height:19px"></div>
<svg style="left:1667px;top:44px" width="17" height="16" viewBox="0 0 17 16"><path d="M5 5.4 L9.4 5.4" stroke="#2a8a3a" stroke-width="1.5"/><path d="M5 5.4 L0.6 5.4" stroke="#2a8a3a" stroke-width="1.5"/><path d="M5 5.4 L5.0 9.8" stroke="#2a8a3a" stroke-width="1.5"/><path d="M5 5.4 L5.0 1.0" stroke="#2a8a3a" stroke-width="1.5"/><path d="M5 5.4 L8.1 8.5" stroke="#2a8a3a" stroke-width="1.5"/><path d="M5 5.4 L1.9 8.5" stroke="#2a8a3a" stroke-width="1.5"/><path d="M5 5.4 L8.1 2.3" stroke="#2a8a3a" stroke-width="1.5"/><path d="M5 5.4 L1.9 2.3" stroke="#2a8a3a" stroke-width="1.5"/><circle cx="5" cy="5.4" r="2.4" fill="#d8f0c0" stroke="#2a8a3a"/><path d="M7.4 8 H16 V11.4 L14 14.8 H9.4 L7.4 11.4 Z" fill="#9a9ea6" stroke="#5a5e66" stroke-width="0.8"/><path d="M9 10.8 H14.4" stroke="#e0e2e6" stroke-width="1.2"/></svg>
</section>
<section aria-label="Debug view" style="left:0;top:0">
<svg style="left:8px;top:82.5px" width="16" height="15" viewBox="0 0 16 15"><path d="M5.8 5.6 L2 3 L1.4 1.6 M5 8 L1 8 M5.6 10.4 L2.6 13 L2.8 14.6 M10.2 5.6 L14 3 L14.6 1.6 M11 8 L15 8 M10.4 10.4 L13.4 13 L13.2 14.6 M6.8 4 L5.4 1 M9.2 4 L10.6 1" fill="none" stroke="#1f5f58" stroke-width="1.25"/><ellipse cx="8" cy="8.4" rx="3.1" ry="4.5" fill="#6fb487" stroke="#1f5f58" stroke-width="1.3"/><ellipse cx="8" cy="8.8" rx="1.4" ry="2.5" fill="#b6e0a8"/></svg>
<span class="t" style="left:27.6px;top:83.30px;letter-spacing:-0.075px;">Debug</span>
<svg style="left:71px;top:84.5px" width="11" height="11" viewBox="0 0 11 11"><path d="M1 1.8 L1.8 1 L5.5 3.8 L9.2 1 L10 1.8 L7.2 5.5 L10 9.2 L9.2 10 L5.5 7.2 L1.8 10 L1 9.2 L3.8 5.5 Z" fill="#fdfdfd" stroke="#b4b4b4" stroke-width="0.9"/></svg>
<svg style="left:774.5px;top:80.5px" width="17" height="17" viewBox="0 0 17 17"><path d="M1 2.4 L2.4 1 L5 3.6 L7.6 1 L9 2.4 L6.4 5 L9 7.6 L7.6 9 L5 6.4 L2.4 9 L1 7.6 L3.6 5 Z" fill="#a9a9a9" stroke="#8e8e8e" stroke-width="0.6" transform="translate(0.4,0.2) scale(1.05)"/><path d="M1 2.4 L2.4 1 L5 3.6 L7.6 1 L9 2.4 L6.4 5 L9 7.6 L7.6 9 L5 6.4 L2.4 9 L1 7.6 L3.6 5 Z" fill="#a9a9a9" stroke="#8e8e8e" stroke-width="0.6" transform="translate(5.4,5.4) scale(1.1)"/></svg>
<svg style="left:802.5px;top:83px" width="10" height="7" viewBox="0 0 10 7"><path d="M0.5 1 H9.5" stroke="#7a7a7a" stroke-width="1.6"/><path d="M4.2 4.2 H5.6 V6 H4.2Z" fill="#7a7a7a"/></svg>
<svg style="left:820px;top:82px" width="10" height="5" viewBox="0 0 10 5"><rect x="0.5" y="0.5" width="9" height="3" fill="#fff" stroke="#b9b9b9"/></svg><svg style="left:839px;top:83px" width="10" height="10" viewBox="0 0 10 10"><rect x="0.5" y="0.5" width="9" height="9" fill="#fff" stroke="#b9b9b9"/><path d="M0.5 2.5 H9.5" stroke="#b9b9b9"/></svg>
<svg style="left:8.5px;top:110.3px" width="10" height="7" viewBox="0 0 10 7"><path d="M1 1 L5 5 L9 1" fill="none" stroke="#242424" stroke-width="1.9"/></svg>
<svg style="left:21.5px;top:104px" width="16" height="16" viewBox="0 0 16 16"><path d="M8 0.6 L15.2 3.6 L8 7 L0.8 3.6 Z" fill="#e9e9e9" stroke="#9a9a9a" stroke-width="0.6"/><path d="M0.8 3.6 L8 7 V15.2 L0.8 11.6 Z" fill="#c9c9c9" stroke="#8f8f8f" stroke-width="0.6"/><path d="M15.2 3.6 L8 7 V15.2 L15.2 11.6 Z" fill="#dedede" stroke="#9a9a9a" stroke-width="0.6"/><path d="M6.2 3 L8 2.2 L9.8 3 L8 3.9 Z" fill="#222"/><path d="M3 7.4 L5.4 8.6 V11 L3 9.8 Z" fill="#222"/><path d="M10.6 8.6 L13 7.4 V9.8 L10.6 11 Z" fill="#2a2a2a"/><path d="M4.4 2.6 L8 1 L11.6 2.6 M4.4 4.6 L8 6 L11.6 4.6" fill="none" stroke="#fff" stroke-width="0.7" opacity=".8"/></svg>
<span class="t" style="left:40.5px;top:104.10px;letter-spacing:-0.084px;">is04_signal_chain_test [Code Composer Studio - Device Debugging]</span>
<svg style="left:38px;top:122px" width="16" height="16" viewBox="0 0 16 16"><path d="M0.6 7.8 L7 11 L0.6 14.2 Z" fill="#3fae4e" stroke="#2c8a3c" stroke-width="0.6"/><path d="M15.16 4.80 L15.16 6.00 L14.06 6.33 L13.71 7.19 L14.25 8.20 L13.40 9.05 L12.39 8.51 L11.53 8.86 L11.20 9.96 L10.00 9.96 L9.67 8.86 L8.81 8.51 L7.80 9.05 L6.95 8.20 L7.49 7.19 L7.14 6.33 L6.04 6.00 L6.04 4.80 L7.14 4.47 L7.49 3.61 L6.95 2.60 L7.80 1.75 L8.81 2.29 L9.67 1.94 L10.00 0.84 L11.20 0.84 L11.53 1.94 L12.39 2.29 L13.40 1.75 L14.25 2.60 L13.71 3.61 L14.06 4.47Z" fill="#f0b040" stroke="#8a5a1a" stroke-width="0.9" stroke-linejoin="round"/><circle cx="10.6" cy="5.4" r="1.7" fill="#fbe4a0" stroke="#8a5a1a" stroke-width="0.8"/></svg>
<span class="t" style="left:57px;top:121.50px;letter-spacing:-0.285px;">Texas Instruments XDS100v2 USB Debug Probe_0/C28xx_CPU1 (Running)</span>
<svg style="left:38px;top:139.5px" width="16" height="16" viewBox="0 0 16 16"><path d="M0.6 9.4 L6.6 15.4 M6.6 9.4 L0.6 15.4" stroke="#c8342c" stroke-width="1.3"/><path d="M15.16 4.80 L15.16 6.00 L14.06 6.33 L13.71 7.19 L14.25 8.20 L13.40 9.05 L12.39 8.51 L11.53 8.86 L11.20 9.96 L10.00 9.96 L9.67 8.86 L8.81 8.51 L7.80 9.05 L6.95 8.20 L7.49 7.19 L7.14 6.33 L6.04 6.00 L6.04 4.80 L7.14 4.47 L7.49 3.61 L6.95 2.60 L7.80 1.75 L8.81 2.29 L9.67 1.94 L10.00 0.84 L11.20 0.84 L11.53 1.94 L12.39 2.29 L13.40 1.75 L14.25 2.60 L13.71 3.61 L14.06 4.47Z" fill="#f0b040" stroke="#8a5a1a" stroke-width="0.9" stroke-linejoin="round"/><circle cx="10.6" cy="5.4" r="1.7" fill="#fbe4a0" stroke="#8a5a1a" stroke-width="0.8"/></svg>
<span class="t" style="left:57px;top:138.90px;letter-spacing:-0.207px;">Texas Instruments XDS100v2 USB Debug Probe_0/CLA1_0 (Disconnected : Unknown)</span>
</section>
<section aria-label="Editor is04_signal_chain_test.c" style="left:0;top:0">
<svg style="left:10px;top:171.6px" width="13" height="15" viewBox="0 0 13 15"><path d="M0.8 0.8 H8.4 L12 4.4 V13.8 H0.8 Z" fill="#fffef6" stroke="#c0a868" stroke-width="1.1"/><path d="M8.4 0.8 V4.4 H12" fill="#f4e8c0" stroke="#c0a868" stroke-width="0.9"/><text x="3" y="11.6" font-family="Liberation Sans, sans-serif" font-weight="bold" font-size="9.5" fill="#2f5fa8">.c</text></svg>
<span class="t" style="left:27px;top:171.80px;letter-spacing:-0.172px;">hal.c</span>
<svg style="left:84px;top:171.6px" width="13" height="15" viewBox="0 0 13 15"><path d="M0.8 0.8 H8.4 L12 4.4 V13.8 H0.8 Z" fill="#fffef6" stroke="#c0a868" stroke-width="1.1"/><path d="M8.4 0.8 V4.4 H12" fill="#f4e8c0" stroke="#c0a868" stroke-width="0.9"/><text x="3" y="11.6" font-family="Liberation Sans, sans-serif" font-weight="bold" font-size="9.5" fill="#2f5fa8">.c</text></svg>
<span class="t" style="left:101px;top:171.80px;letter-spacing:-0.303px;">is04_signal_chain_test.c</span>
<svg style="left:231px;top:172.5px" width="11" height="11" viewBox="0 0 11 11"><path d="M1 1.8 L1.8 1 L5.5 3.8 L9.2 1 L10 1.8 L7.2 5.5 L10 9.2 L9.2 10 L5.5 7.2 L1.8 10 L1 9.2 L3.8 5.5 Z" fill="#fdfdfd" stroke="#b4b4b4" stroke-width="0.9"/></svg>
<svg style="left:257px;top:171.6px" width="13" height="15" viewBox="0 0 13 15"><path d="M0.8 0.8 H8.4 L12 4.4 V13.8 H0.8 Z" fill="#fffef6" stroke="#c0a868" stroke-width="1.1"/><path d="M8.4 0.8 V4.4 H12" fill="#f4e8c0" stroke="#c0a868" stroke-width="0.9"/><text x="3" y="11.6" font-family="Liberation Sans, sans-serif" font-weight="bold" font-size="9.5" fill="#2f5fa8">.c</text></svg>
<span class="t" style="left:274px;top:171.80px;letter-spacing:-0.169px;">user.c</span>
<svg style="left:335px;top:170px" width="15" height="16" viewBox="0 0 15 16"><path d="M1.6 2.6 H5 L6 1 H11.4 V3" fill="#f0c050" stroke="#a87a24" stroke-width="0.9"/><path d="M2.8 3 H10.4 L14 6.6 V15.2 H2.8 Z" fill="#fffef6" stroke="#b09a58" stroke-width="1.1"/><text x="5.2" y="13.4" font-family="Liberation Sans, sans-serif" font-weight="bold" font-size="9.5" fill="#6a5a2a">h</text></svg>
<span class="t" style="left:354px;top:171.80px;letter-spacing:-0.117px;">user.h</span>
<svg style="left:820px;top:171px" width="10" height="5" viewBox="0 0 10 5"><rect x="0.5" y="0.5" width="9" height="3" fill="#fff" stroke="#b9b9b9"/></svg><svg style="left:839px;top:172px" width="10" height="10" viewBox="0 0 10 10"><rect x="0.5" y="0.5" width="9" height="9" fill="#fff" stroke="#b9b9b9"/><path d="M0.5 2.5 H9.5" stroke="#b9b9b9"/></svg>
<div style="left:16px;top:191px;width:812px;height:328px;overflow:hidden">
<div style="left:-16px;top:-191px;width:0;height:0">
<span class="m" style="left:24px;top:187.00px;line-height:17px;color:#787878;">801</span>
<span class="m" style="left:79.88px;top:187.00px;line-height:17px;color:#000;letter-spacing:0.006px;">motorVars.</span>
<span class="m" style="left:154.58px;top:187.00px;line-height:17px;color:#0000c0;letter-spacing:0.006px;">Vbus_sf</span>
<span class="m" style="left:214.34px;top:187.00px;line-height:17px;color:#000;letter-spacing:0.006px;">= adcData.</span>
<span class="m" style="left:289.04px;top:187.00px;line-height:17px;color:#0000c0;letter-spacing:0.006px;">dcBus_V</span>
<span class="m" style="left:348.8px;top:187.00px;line-height:17px;color:#000;letter-spacing:0.005px;">* motorVars.</span>
<span class="m" style="left:438.44px;top:187.00px;line-height:17px;color:#0000c0;letter-spacing:0.006px;">offset_invVbus_invV</span>
<span class="m" style="left:580.37px;top:187.00px;line-height:17px;color:#000;">;</span>
<span class="m" style="left:24px;top:203.95px;line-height:17px;color:#787878;">802</span>
<span class="m" style="left:24px;top:220.90px;line-height:17px;color:#787878;">803</span>
<span class="m" style="left:79.88px;top:220.90px;line-height:17px;color:#3f7f5f;">//</span>
<span class="m" style="left:24px;top:237.85px;line-height:17px;color:#787878;">804</span>
<span class="m" style="left:79.88px;top:237.85px;line-height:17px;color:#3f7f5f;letter-spacing:0.006px;">// remove offsets</span>
<span class="m" style="left:24px;top:254.80px;line-height:17px;color:#787878;">805</span>
<span class="m" style="left:79.88px;top:254.80px;line-height:17px;color:#3f7f5f;">//</span>
<span class="m" style="left:24px;top:271.75px;line-height:17px;color:#787878;">806</span>
<span class="m" style="left:79.88px;top:271.75px;line-height:17px;color:#000;letter-spacing:0.005px;">adcData.</span>
<span class="m" style="left:139.64px;top:271.75px;line-height:17px;color:#0000c0;">I_A</span>
<span class="m" style="left:162.05px;top:271.75px;line-height:17px;color:#000;">.</span>
<span class="m" style="left:169.52px;top:271.75px;line-height:17px;color:#0000c0;letter-spacing:0.004px;">value</span>
<span class="m" style="left:206.87px;top:271.75px;line-height:17px;color:#000;letter-spacing:0.006px;">[0] -= motorVars.</span>
<span class="m" style="left:333.86px;top:271.75px;line-height:17px;color:#0000c0;letter-spacing:0.006px;">offsets_I_A</span>
<span class="m" style="left:416.03px;top:271.75px;line-height:17px;color:#000;">.</span>
<span class="m" style="left:423.5px;top:271.75px;line-height:17px;color:#0000c0;letter-spacing:0.004px;">value</span>
<span class="m" style="left:460.85px;top:271.75px;line-height:17px;color:#000;letter-spacing:0.005px;">[0];</span>
<span class="m" style="left:24px;top:288.70px;line-height:17px;color:#787878;">807</span>
<span class="m" style="left:79.88px;top:288.70px;line-height:17px;color:#000;letter-spacing:0.005px;">adcData.</span>
<span class="m" style="left:139.64px;top:288.70px;line-height:17px;color:#0000c0;">I_A</span>
<span class="m" style="left:162.05px;top:288.70px;line-height:17px;color:#000;">.</span>
<span class="m" style="left:169.52px;top:288.70px;line-height:17px;color:#0000c0;letter-spacing:0.004px;">value</span>
<span class="m" style="left:206.87px;top:288.70px;line-height:17px;color:#000;letter-spacing:0.006px;">[1] -= motorVars.</span>
<span class="m" style="left:333.86px;top:288.70px;line-height:17px;color:#0000c0;letter-spacing:0.006px;">offsets_I_A</span>
<span class="m" style="left:416.03px;top:288.70px;line-height:17px;color:#000;">.</span>
<span class="m" style="left:423.5px;top:288.70px;line-height:17px;color:#0000c0;letter-spacing:0.004px;">value</span>
<span class="m" style="left:460.85px;top:288.70px;line-height:17px;color:#000;letter-spacing:0.005px;">[1];</span>
<span class="m" style="left:24px;top:305.65px;line-height:17px;color:#787878;">808</span>
<span class="m" style="left:79.88px;top:305.65px;line-height:17px;color:#3f7f5f;letter-spacing:0.006px;">//adcData.I_A.value[2] -= motorVars.offsets_I_A.value[2];</span>
<span class="m" style="left:24px;top:322.60px;line-height:17px;color:#787878;">809</span>
<span class="m" style="left:79.88px;top:322.60px;line-height:17px;color:#000;letter-spacing:0.005px;">adcData.</span>
<span class="m" style="left:139.64px;top:322.60px;line-height:17px;color:#0000c0;">V_V</span>
<span class="m" style="left:162.05px;top:322.60px;line-height:17px;color:#000;">.</span>
<span class="m" style="left:169.52px;top:322.60px;line-height:17px;color:#0000c0;letter-spacing:0.004px;">value</span>
<span class="m" style="left:206.87px;top:322.60px;line-height:17px;color:#000;letter-spacing:0.006px;">[0] -= motorVars.</span>
<span class="m" style="left:333.86px;top:322.60px;line-height:17px;color:#0000c0;letter-spacing:0.006px;">offsets_V_V</span>
<span class="m" style="left:416.03px;top:322.60px;line-height:17px;color:#000;">.</span>
<span class="m" style="left:423.5px;top:322.60px;line-height:17px;color:#0000c0;letter-spacing:0.004px;">value</span>
<span class="m" style="left:460.85px;top:322.60px;line-height:17px;color:#000;letter-spacing:0.006px;">[0] * motorVars.</span>
<span class="m" style="left:580.37px;top:322.60px;line-height:17px;color:#0000c0;letter-spacing:0.006px;">Vbus_sf</span>
<span class="m" style="left:632.66px;top:322.60px;line-height:17px;color:#000;">;</span>
<span class="m" style="left:24px;top:339.55px;line-height:17px;color:#787878;">810</span>
<span class="m" style="left:79.88px;top:339.55px;line-height:17px;color:#000;letter-spacing:0.005px;">adcData.</span>
<span class="m" style="left:139.64px;top:339.55px;line-height:17px;color:#0000c0;">V_V</span>
<span class="m" style="left:162.05px;top:339.55px;line-height:17px;color:#000;">.</span>
<span class="m" style="left:169.52px;top:339.55px;line-height:17px;color:#0000c0;letter-spacing:0.004px;">value</span>
<span class="m" style="left:206.87px;top:339.55px;line-height:17px;color:#000;letter-spacing:0.006px;">[1] -= motorVars.</span>
<span class="m" style="left:333.86px;top:339.55px;line-height:17px;color:#0000c0;letter-spacing:0.006px;">offsets_V_V</span>
<span class="m" style="left:416.03px;top:339.55px;line-height:17px;color:#000;">.</span>
<span class="m" style="left:423.5px;top:339.55px;line-height:17px;color:#0000c0;letter-spacing:0.004px;">value</span>
<span class="m" style="left:460.85px;top:339.55px;line-height:17px;color:#000;letter-spacing:0.006px;">[1] * motorVars.</span>
<span class="m" style="left:580.37px;top:339.55px;line-height:17px;color:#0000c0;letter-spacing:0.006px;">Vbus_sf</span>
<span class="m" style="left:632.66px;top:339.55px;line-height:17px;color:#000;">;</span>
<span class="m" style="left:24px;top:356.50px;line-height:17px;color:#787878;">811</span>
<span class="m" style="left:79.88px;top:356.50px;line-height:17px;color:#000;letter-spacing:0.005px;">adcData.</span>
<span class="m" style="left:139.64px;top:356.50px;line-height:17px;color:#0000c0;">V_V</span>
<span class="m" style="left:162.05px;top:356.50px;line-height:17px;color:#000;">.</span>
<span class="m" style="left:169.52px;top:356.50px;line-height:17px;color:#0000c0;letter-spacing:0.004px;">value</span>
<span class="m" style="left:206.87px;top:356.50px;line-height:17px;color:#000;letter-spacing:0.006px;">[2] -= motorVars.</span>
<span class="m" style="left:333.86px;top:356.50px;line-height:17px;color:#0000c0;letter-spacing:0.006px;">offsets_V_V</span>
<span class="m" style="left:416.03px;top:356.50px;line-height:17px;color:#000;">.</span>
<span class="m" style="left:423.5px;top:356.50px;line-height:17px;color:#0000c0;letter-spacing:0.004px;">value</span>
<span class="m" style="left:460.85px;top:356.50px;line-height:17px;color:#000;letter-spacing:0.006px;">[2] * motorVars.</span>
<span class="m" style="left:580.37px;top:356.50px;line-height:17px;color:#0000c0;letter-spacing:0.006px;">Vbus_sf</span>
<span class="m" style="left:632.66px;top:356.50px;line-height:17px;color:#000;">;</span>
<span class="m" style="left:24px;top:373.45px;line-height:17px;color:#787878;">812</span>
<span class="m" style="left:24px;top:390.40px;line-height:17px;color:#787878;">813</span>
<span class="m" style="left:79.88px;top:390.40px;line-height:17px;color:#fff;letter-spacing:0.006px;">adcData.I_A.value[2] = 0 - adcData.I_A.value[1] - adcData.I_A.value[0];</span>
<span class="m" style="left:24px;top:407.35px;line-height:17px;color:#787878;">814</span>
<span class="m" style="left:24px;top:424.30px;line-height:17px;color:#787878;">815</span>
<span class="m" style="left:79.88px;top:424.30px;line-height:17px;color:#7f0055;font-weight:bold;">if</span>
<span class="m" style="left:94.82px;top:424.30px;line-height:17px;color:#000;letter-spacing:0.006px;">(motorVars.</span>
<span class="m" style="left:176.99px;top:424.30px;line-height:17px;color:#0000c0;letter-spacing:0.006px;">flagEnableOffsetCalc</span>
<span class="m" style="left:333.86px;top:424.30px;line-height:17px;color:#000;letter-spacing:0.005px;">== false)</span>
<span class="m" style="left:24px;top:441.25px;line-height:17px;color:#787878;">816</span>
<span class="m" style="left:79.88px;top:441.25px;line-height:17px;color:#000;">{</span>
<span class="m" style="left:24px;top:458.20px;line-height:17px;color:#787878;">817</span>
<span class="m" style="left:109.76px;top:458.20px;line-height:17px;color:#005032;letter-spacing:0.005px;">float32_t</span>
<span class="m" style="left:184.46px;top:458.20px;line-height:17px;color:#000;letter-spacing:0.005px;">outMax_V;</span>
<span class="m" style="left:24px;top:475.15px;line-height:17px;color:#787878;">818</span>
<span class="m" style="left:109.76px;top:475.15px;line-height:17px;color:#005032;letter-spacing:0.005px;">MATH_Vec2</span>
<span class="m" style="left:184.46px;top:475.15px;line-height:17px;color:#000;letter-spacing:0.006px;">phasor;</span>
<span class="m" style="left:24px;top:492.10px;line-height:17px;color:#787878;">819</span>
<span class="m" style="left:24px;top:509.05px;line-height:17px;color:#787878;">820</span>
<span class="m" style="left:109.76px;top:509.05px;line-height:17px;color:#3f7f5f;">//</span>
</div></div>
<svg style="left:832.5px;top:198px" width="8" height="6.4" viewBox="0 0 8 6.4"><path d="M1 4.8 L4 1.6 L7 4.8" fill="none" stroke="#505050" stroke-width="1.5"/></svg>
<svg style="left:832.5px;top:507px" width="8" height="6.4" viewBox="0 0 8 6.4"><path d="M1 1.4 L4 4.6 L7 1.4" fill="none" stroke="#505050" stroke-width="1.5"/></svg>
<svg style="left:53px;top:524.5px" width="6.4" height="8" viewBox="0 0 6.4 8"><path d="M4.8 1 L1.6 4 L4.8 7" fill="none" stroke="#a0a0a0" stroke-width="1.2"/></svg>
<svg style="left:816px;top:524.5px" width="6.4" height="8" viewBox="0 0 6.4 8"><path d="M1.4 1 L4.6 4 L1.4 7" fill="none" stroke="#a0a0a0" stroke-width="1.2"/></svg>
</section>
<section aria-label="Console view" style="left:0;top:0">
<svg style="left:10px;top:549px" width="14" height="14" viewBox="0 0 14 14"><rect x="0.9" y="0.9" width="12.2" height="9.4" rx="1" fill="#e9eef8" stroke="#2f5fa8" stroke-width="1.8"/><rect x="3.6" y="3.6" width="4.6" height="1.8" fill="#8ea2c6"/><rect x="3.6" y="5.2" width="6.8" height="1.6" fill="#8ea2c6"/><rect x="5" y="11" width="4" height="1.4" fill="#2f5fa8"/><rect x="2" y="12.2" width="10" height="1.5" fill="#5b87c8"/></svg>
<span class="t" style="left:27.5px;top:548.70px;letter-spacing:-0.262px;">Console</span>
<svg style="left:77px;top:551px" width="11" height="11" viewBox="0 0 11 11"><path d="M1 1.8 L1.8 1 L5.5 3.8 L9.2 1 L10 1.8 L7.2 5.5 L10 9.2 L9.2 10 L5.5 7.2 L1.8 10 L1 9.2 L3.8 5.5 Z" fill="#fdfdfd" stroke="#b4b4b4" stroke-width="0.9"/></svg>
<svg style="left:99px;top:549px" width="17" height="16" viewBox="0 0 17 16"><path d="M3.6 1 H13 Q15.6 1 15.6 3 V11 H5.6 V4.6 Q5.6 3.4 4.4 3.4 Q2.6 3.4 2.6 5 L0.8 3.4 Q1.4 1 3.6 1 Z" fill="#dcdcdc" stroke="#7e7e7e" stroke-width="0.9"/><rect x="7.4" y="4" width="7" height="5.6" fill="#6a6a6a"/><rect x="8.6" y="5.2" width="4.6" height="1.2" fill="#e8e8e8"/><rect x="8.6" y="7.2" width="4.6" height="1.2" fill="#e8e8e8"/><path d="M5.6 8.6 L2.2 11.6 Q1.2 13 2.4 14 Q3.6 15 4.8 13.8 L7 11" fill="#e6e6e6" stroke="#7e7e7e" stroke-width="0.9"/></svg>
<span class="t" style="left:119.5px;top:548.70px;letter-spacing:-0.057px;">Scripting Console</span>
<span class="t" style="left:5px;top:569.40px;color:#000;letter-spacing:-0.315px;">is04_signal_chain_test</span>
<span class="m" style="left:6.8px;top:583.60px;line-height:17px;color:#000;letter-spacing:0.006px;">C28xx_CPU1: GEL Output: ... DCSM Initialization Start ...</span>
<span class="m" style="left:6.8px;top:600.20px;line-height:17px;color:#000;letter-spacing:0.006px;">C28xx_CPU1: GEL Output: ... DCSM Initialization Done ...</span>
<svg style="left:666px;top:545.5px" width="16" height="16" viewBox="0 0 16 16"><path d="M0.8 0.8 H6.4 L9.6 4 V12.4 H0.8 Z" fill="#fbfaf4" stroke="#b8b09a" stroke-width="0.9"/><rect x="2" y="3.6" width="4.6" height="7.6" fill="#b7c2dc"/><path d="M8 9 L14.6 15 M14.6 9 L8 15" stroke="#3a3a3a" stroke-width="2.2"/></svg><svg style="left:685.5px;top:545.5px" width="16" height="16" viewBox="0 0 16 16"><rect x="3.6" y="0.8" width="11.4" height="12" fill="#f2f4fa" stroke="#a8b0c4"/><rect x="11.4" y="1.4" width="3" height="11" fill="#c4d4ec"/><path d="M12 3 L13 2 L14 3 M12 10.8 L13 11.8 L14 10.8" fill="none" stroke="#4a6a9a" stroke-width="0.8"/><path d="M2.4 8.6 V6.8 Q2.4 4.6 4.4 4.6 Q6.4 4.6 6.4 6.8 V8.6" fill="none" stroke="#a87a1c" stroke-width="1.2"/><rect x="0.8" y="8.4" width="7.2" height="6.4" rx="0.8" fill="#f4c64e" stroke="#a87a1c" stroke-width="0.9"/></svg><svg style="left:705px;top:545.5px" width="16" height="16" viewBox="0 0 16 16"><path d="M0.8 0.8 H6.4 L9.6 4 V12.4 H0.8 Z" fill="#fbfaf4" stroke="#b8b09a" stroke-width="0.9"/><rect x="2" y="3.6" width="4.6" height="7.6" fill="#b7c2dc"/><path d="M13.6 3.6 V10 H9.4 V12.4 L5.4 9 L9.4 5.6 V8 H11.4 V3.6 Z" fill="#f8e2a0" stroke="#c8a04a" stroke-width="0.8"/></svg><div style="left:723px;top:544.5px;width:1px;height:17px;background:#b8b8b8"></div><svg style="left:729px;top:545.5px" width="16" height="16" viewBox="0 0 16 16"><rect x="0.6" y="5" width="12.4" height="9.6" fill="#f8fafd" stroke="#7a8aa4"/><rect x="1" y="5.4" width="11.6" height="2.6" fill="#4a7cc4"/><path d="M8 9.6 L10 7.4" stroke="#555" stroke-width="1"/><path d="M9 5.4 L12 1.2 Q13.4 0.2 14.6 1.4 Q15.6 2.8 14.4 4 L10.8 7.4 Z" fill="#2fae3a" stroke="#1c7a2a" stroke-width="0.8"/></svg><svg style="left:749.6px;top:546px" width="14" height="14" viewBox="0 0 14 14"><rect x="0.9" y="0.9" width="12.2" height="9.4" rx="1" fill="#e9eef8" stroke="#2f5fa8" stroke-width="1.8"/><rect x="3.6" y="3.6" width="4.6" height="1.8" fill="#8ea2c6"/><rect x="3.6" y="5.2" width="6.8" height="1.6" fill="#8ea2c6"/><rect x="5" y="11" width="4" height="1.4" fill="#2f5fa8"/><rect x="2" y="12.2" width="10" height="1.5" fill="#5b87c8"/></svg><svg style="left:769px;top:551px" width="7" height="4.5" viewBox="0 0 7 4.5"><path d="M0 0 H7 L3.5 4.5 Z" fill="#111"/></svg><svg style="left:783px;top:545.5px" width="17" height="16" viewBox="0 0 17 16"><rect x="0.6" y="3.6" width="13" height="11" fill="#fdfdfd" stroke="#9a8e6a" stroke-width="1.1"/><rect x="1.1" y="4.1" width="12" height="2.6" fill="#3f7fc4"/><path d="M9 10.4 H13 V14" fill="none" stroke="#ecd58a"/><path d="M12.6 0.3 L16.1 3.8 L12.6 7.3 L9.1 3.8 Z" fill="#fbe58a" stroke="#b08a28" stroke-width="0.9"/></svg><svg style="left:804px;top:551px" width="7" height="4.5" viewBox="0 0 7 4.5"><path d="M0 0 H7 L3.5 4.5 Z" fill="#111"/></svg>
<svg style="left:820px;top:548px" width="10" height="5" viewBox="0 0 10 5"><rect x="0.5" y="0.5" width="9" height="3" fill="#fff" stroke="#b9b9b9"/></svg><svg style="left:839px;top:549px" width="10" height="10" viewBox="0 0 10 10"><rect x="0.5" y="0.5" width="9" height="9" fill="#fff" stroke="#b9b9b9"/><path d="M0.5 2.5 H9.5" stroke="#b9b9b9"/></svg>
<svg style="left:846.5px;top:592.5px" width="8" height="6.4" viewBox="0 0 8 6.4"><path d="M1 4.8 L4 1.6 L7 4.8" fill="none" stroke="#505050" stroke-width="1.5"/></svg>
<svg style="left:846.5px;top:621.5px" width="8" height="6.4" viewBox="0 0 8 6.4"><path d="M1 1.4 L4 4.6 L7 1.4" fill="none" stroke="#505050" stroke-width="1.5"/></svg>
<svg style="left:9.5px;top:638px" width="6.4" height="8" viewBox="0 0 6.4 8"><path d="M4.8 1 L1.6 4 L4.8 7" fill="none" stroke="#a0a0a0" stroke-width="1.2"/></svg>
<svg style="left:829.5px;top:638px" width="6.4" height="8" viewBox="0 0 6.4 8"><path d="M1.4 1 L4.6 4 L1.4 7" fill="none" stroke="#a0a0a0" stroke-width="1.2"/></svg>
</section>
<section aria-label="Status bar" style="left:0;top:0">
<div style="left:516px;top:654px;width:34px;height:21px;border-right:1px solid #a9a9a9;border-bottom:1px solid #a9a9a9;box-sizing:border-box;"></div>
<svg style="left:520px;top:658px" width="18" height="16" viewBox="0 0 18 16"><path d="M2.6 7.4 Q1.4 4.4 4 3 Q5 0.6 8 1.4 Q10.6 0.8 11.4 3.4 Q13.6 4.4 12.6 7.4 Z" fill="#f6d878" stroke="#c29a30" stroke-width="0.8"/><circle cx="5.4" cy="10" r="3.6" fill="#e4ecf8" stroke="#9aa8c0" stroke-width="0.9"/><path d="M5.4 8 V10 H7" fill="none" stroke="#6a7a94" stroke-width="0.8"/><rect x="8" y="6.6" width="8.6" height="6.4" fill="#eef4fc" stroke="#4a78c0" stroke-width="1.2"/><rect x="10" y="13.4" width="4.6" height="1.4" fill="#4a78c0"/></svg>
<div style="left:554px;top:655px;width:1px;height:21px;background:#d2d2d2;"></div>
<div style="left:672px;top:655px;width:1px;height:21px;background:#d2d2d2;"></div>
<div style="left:783px;top:655px;width:1px;height:21px;background:#d2d2d2;"></div>
<span class="t" style="left:561.5px;top:657.90px;letter-spacing:0.038px;">Writable</span>
<span class="t" style="left:680px;top:657.90px;letter-spacing:-0.172px;">Smart Insert</span>
<span class="t" style="left:790.6px;top:657.90px;letter-spacing:-0.329px;">813 : 1</span>
<svg style="left:892.2px;top:660px" width="2" height="13" viewBox="0 0 2 13"><rect x="0" y="0.0" width="1.6" height="1.4" fill="#b9b9b9"/><rect x="0" y="3.7" width="1.6" height="1.4" fill="#b9b9b9"/><rect x="0" y="7.4" width="1.6" height="1.4" fill="#b9b9b9"/><rect x="0" y="11.1" width="1.6" height="1.4" fill="#b9b9b9"/></svg>
<svg style="left:1219.8px;top:660px" width="2" height="13" viewBox="0 0 2 13"><rect x="0" y="0.0" width="1.6" height="1.4" fill="#b9b9b9"/><rect x="0" y="3.7" width="1.6" height="1.4" fill="#b9b9b9"/><rect x="0" y="7.4" width="1.6" height="1.4" fill="#b9b9b9"/><rect x="0" y="11.1" width="1.6" height="1.4" fill="#b9b9b9"/></svg>
<svg style="left:1233.0px;top:660px" width="2" height="13" viewBox="0 0 2 13"><rect x="0" y="0.0" width="1.6" height="1.4" fill="#b9b9b9"/><rect x="0" y="3.7" width="1.6" height="1.4" fill="#b9b9b9"/><rect x="0" y="7.4" width="1.6" height="1.4" fill="#b9b9b9"/><rect x="0" y="11.1" width="1.6" height="1.4" fill="#b9b9b9"/></svg>
<div style="left:1282px;top:649px;width:21.5px;height:21.5px;border-right:1px solid #a9a9a9;border-bottom:1px solid #a9a9a9;box-sizing:border-box;overflow:hidden;"></div>
<div style="left:1282px;top:652px;width:9px;height:16px;overflow:hidden"><svg style="left:-9px;top:0px" width="18" height="16" viewBox="0 0 18 16"><path d="M2.6 7.4 Q1.4 4.4 4 3 Q5 0.6 8 1.4 Q10.6 0.8 11.4 3.4 Q13.6 4.4 12.6 7.4 Z" fill="#f6d878" stroke="#c29a30" stroke-width="0.8"/><circle cx="5.4" cy="10" r="3.6" fill="#e4ecf8" stroke="#9aa8c0" stroke-width="0.9"/><path d="M5.4 8 V10 H7" fill="none" stroke="#6a7a94" stroke-width="0.8"/><rect x="8" y="6.6" width="8.6" height="6.4" fill="#eef4fc" stroke="#4a78c0" stroke-width="1.2"/><rect x="10" y="13.4" width="4.6" height="1.4" fill="#4a78c0"/></svg></div>
<svg style="left:1305.7px;top:655.5px" width="2" height="13" viewBox="0 0 2 13"><rect x="0" y="0.0" width="1.6" height="1.4" fill="#b9b9b9"/><rect x="0" y="3.7" width="1.6" height="1.4" fill="#b9b9b9"/><rect x="0" y="7.4" width="1.6" height="1.4" fill="#b9b9b9"/><rect x="0" y="11.1" width="1.6" height="1.4" fill="#b9b9b9"/></svg>
<svg style="left:1632.2px;top:655.5px" width="2" height="13" viewBox="0 0 2 13"><rect x="0" y="0.0" width="1.6" height="1.4" fill="#b9b9b9"/><rect x="0" y="3.7" width="1.6" height="1.4" fill="#b9b9b9"/><rect x="0" y="7.4" width="1.6" height="1.4" fill="#b9b9b9"/><rect x="0" y="11.1" width="1.6" height="1.4" fill="#b9b9b9"/></svg>
<svg style="left:1645.9px;top:655.5px" width="2" height="13" viewBox="0 0 2 13"><rect x="0" y="0.0" width="1.6" height="1.4" fill="#b9b9b9"/><rect x="0" y="3.7" width="1.6" height="1.4" fill="#b9b9b9"/><rect x="0" y="7.4" width="1.6" height="1.4" fill="#b9b9b9"/><rect x="0" y="11.1" width="1.6" height="1.4" fill="#b9b9b9"/></svg>
</section>
<section aria-label="Expressions view tabs and toolbars" style="left:0;top:0">
<svg style="left:868.6px;top:82.6px" width="18" height="14" viewBox="0 0 18 14"><circle cx="3.7" cy="6.8" r="2.4" fill="none" stroke="#2d4566" stroke-width="1.25"/><circle cx="10.6" cy="6.8" r="2.4" fill="none" stroke="#2d4566" stroke-width="1.25"/><path d="M6 5.6 Q7.2 4.8 8.3 5.6" fill="none" stroke="#2d4566" stroke-width="1.1"/><path d="M1.6 5.6 Q3.4 1.4 6.2 0.8 Q7.6 1 7.8 2.6" fill="none" stroke="#2d4566" stroke-width="1.15"/><path d="M12.2 4.8 Q14 1.6 15.6 1.4 Q16.8 1.8 17 3.4" fill="none" stroke="#2d4566" stroke-width="1.15"/><path d="M6.2 10.6 H8.2 V13 H6.2Z" fill="#7d8aa0"/><path d="M10.6 11 H14.4 M10.6 12.8 H14.4" stroke="#2d4566" stroke-width="0.9"/></svg>
<span class="t" style="left:889.7px;top:82.70px;letter-spacing:-0.461px;">Expressions</span>
<svg style="left:958px;top:84.5px" width="11" height="11" viewBox="0 0 11 11"><path d="M1 1.8 L1.8 1 L5.5 3.8 L9.2 1 L10 1.8 L7.2 5.5 L10 9.2 L9.2 10 L5.5 7.2 L1.8 10 L1 9.2 L3.8 5.5 Z" fill="#fdfdfd" stroke="#b4b4b4" stroke-width="0.9"/></svg>
<svg style="left:981px;top:83.5px" width="17" height="13" viewBox="0 0 17 13"><text x="0.2" y="5.6" font-family="Liberation Sans, sans-serif" font-size="7.4" font-weight="bold" fill="#7686a2" textLength="15.6" lengthAdjust="spacingAndGlyphs">1010</text><text x="0.2" y="11.8" font-family="Liberation Sans, sans-serif" font-size="7.4" font-weight="bold" fill="#7686a2" textLength="15.6" lengthAdjust="spacingAndGlyphs">0101</text></svg>
<span class="t" style="left:1000.6px;top:82.70px;letter-spacing:-0.432px;">Registers</span>
<svg style="left:1059px;top:83.6px" width="14" height="13" viewBox="0 0 14 13"><rect x="0.6" y="0.6" width="12.6" height="11.4" fill="#eaf0fa" stroke="#4a78b8" stroke-width="1.1"/><rect x="1" y="1" width="11.8" height="2.2" fill="#5a8ad0"/><rect x="2.6" y="5" width="3.4" height="5" fill="none" stroke="#3a5a9a" stroke-width="1"/><rect x="7.6" y="5" width="3.2" height="2.6" fill="none" stroke="#3a5a9a" stroke-width="1"/><path d="M7.4 10 H11" stroke="#3a5a9a" stroke-width="1"/></svg>
<span class="t" style="left:1077.8px;top:82.70px;letter-spacing:0.198px;">Memory Map</span>
<svg style="left:1159px;top:82px" width="17" height="16" viewBox="0 0 17 16"><path d="M9.4 3.4 L14 0.6 L16.2 2.4 L15.6 6.4 L12.6 9.4 Z" fill="#f6d58a" stroke="#c8963c" stroke-width="0.8"/><circle cx="13.6" cy="3.6" r="0.9" fill="#7a5a2a"/><path d="M6.4 6.8 L9.4 3.4 L12.6 9.4 L9.6 12 Z" fill="#9a8e8a" stroke="#74685e" stroke-width="0.8"/><path d="M1.6 11.8 L6.4 6.8 L9.6 12 L4.6 15.6 Q2.6 15.8 1.6 14 Z" fill="#fbeeb8" stroke="#e6c87a" stroke-width="0.8"/></svg>
<span class="t" style="left:1179.4px;top:82.70px;letter-spacing:-0.489px;">Search</span>
<svg style="left:1238px;top:81.5px" width="10" height="5" viewBox="0 0 10 5"><rect x="0.5" y="0.5" width="9" height="3" fill="#fff" stroke="#b9b9b9"/></svg><svg style="left:1257px;top:82.5px" width="10" height="10" viewBox="0 0 10 10"><rect x="0.5" y="0.5" width="9" height="9" fill="#fff" stroke="#b9b9b9"/><path d="M0.5 2.5 H9.5" stroke="#b9b9b9"/></svg>
<div style="left:1044px;top:102px;width:231px;height:19.5px;background:#f3f3f3;"></div>
<svg style="left:1046.4px;top:104.0px" width="17" height="15" viewBox="0 0 17 15"><path d="M6.4 0.6 Q3 5 1 12 M1.6 1.6 Q5 3 7.4 9.6" fill="none" stroke="#a8a8a8" stroke-width="1.2"/><path d="M4.4 5.6 H15 Q16 5.6 16 6.6 V13.4 H3" fill="#f4f4f4" stroke="#bdbdbd" stroke-width="0.9"/><path d="M5 11.6 H6.6 M8 11.6 H9.6 M11 11.6 H12.6" stroke="#a8a8a8" stroke-width="1.2"/></svg><div class="hl" style="left:1064.0px;top:102.0px;width:20px;height:19px"></div><svg style="left:1066.0px;top:104.5px" width="16" height="14" viewBox="0 0 16 14"><path d="M0.6 5 H4.6 V2.6 L8.6 6.6 L4.6 10.6 V8.2 H0.6 Z" fill="#fbe27a" stroke="#c29a30" stroke-width="0.8"/><path d="M10 13.6 V3" stroke="#2f5fa8" stroke-width="1.3"/><path d="M7.6 4 L10 0.8 L12.4 4 Z" fill="#2f5fa8"/><rect x="11.6" y="5" width="3.4" height="2.6" fill="#e85a4a" stroke="#b8342a" stroke-width="0.6"/><rect x="11.6" y="10" width="3.4" height="2.6" fill="#e85a4a" stroke="#b8342a" stroke-width="0.6"/><path d="M10 6.4 H11.6 M10 11.4 H11.6" stroke="#2f5fa8"/></svg><svg style="left:1087.0px;top:105.0px" width="14" height="14" viewBox="0 0 14 14"><rect x="0.6" y="0.6" width="9.6" height="9.6" fill="#f4f7fc" stroke="#9ab0d0"/><rect x="3" y="3" width="10.2" height="10.2" fill="#fbfcfe" stroke="#7a98c4" stroke-width="1.1"/><path d="M5 8.2 H11.2" stroke="#2f5fa8" stroke-width="1.8"/></svg><div style="left:1104.0px;top:103.0px;width:1px;height:17px;background:#b8b8b8"></div><svg style="left:1110.0px;top:104.5px" width="14" height="14" viewBox="0 0 14 14"><path d="M4.8 0.8 H8.8 V4.8 H12.8 V8.8 H8.8 V12.8 H4.8 V8.8 H0.8 V4.8 H4.8 Z" fill="#8fd04a" stroke="#4a9a1c" stroke-width="1"/><path d="M6 2 H7.6 V6 H11.6" fill="none" stroke="#c8f09a" stroke-width="0.9"/></svg><svg style="left:1129.6px;top:105.0px" width="14" height="13" viewBox="0 0 14 13"><path d="M1 2.6 L2.8 0.8 L7 5 L11.2 0.8 L13 2.6 L8.8 6.6 L13 10.6 L11.2 12.4 L7 8.4 L2.8 12.4 L1 10.6 L5.2 6.6 Z" fill="#b0b0b0" stroke="#9e9e9e" stroke-width="0.6"/></svg><svg style="left:1147.6px;top:103.0px" width="17" height="17" viewBox="0 0 17 17"><path d="M1 2.4 L2.4 1 L5 3.6 L7.6 1 L9 2.4 L6.4 5 L9 7.6 L7.6 9 L5 6.4 L2.4 9 L1 7.6 L3.6 5 Z" fill="#7e7e7e" stroke="#4a4a4a" stroke-width="0.6" transform="translate(0.4,0.2) scale(1.05)"/><path d="M1 2.4 L2.4 1 L5 3.6 L7.6 1 L9 2.4 L6.4 5 L9 7.6 L7.6 9 L5 6.4 L2.4 9 L1 7.6 L3.6 5 Z" fill="#7e7e7e" stroke="#4a4a4a" stroke-width="0.6" transform="translate(5.4,5.4) scale(1.1)"/></svg><div class="hl" style="left:1165.5px;top:102.0px;width:20px;height:19px"></div><svg style="left:1167.4px;top:103.5px" width="17" height="16" viewBox="0 0 17 16"><path d="M3 1 H7 V8 H9.6 L5 14.6 L0.6 8 H3 Z" fill="#fbe27a" stroke="#c29a30" stroke-width="0.9" stroke-linejoin="round"/><path d="M9.6 13 V7 H7.4 L11.8 1 L16.2 7 H13.8 V13 Z" fill="#fbe27a" stroke="#c29a30" stroke-width="0.9" stroke-linejoin="round"/></svg><div style="left:1186.5px;top:103.0px;width:1px;height:17px;background:#b8b8b8"></div><svg style="left:1190.6px;top:104.0px" width="16" height="15" viewBox="0 0 16 15"><rect x="0.6" y="3.6" width="13" height="10.8" fill="#fdfdfd" stroke="#9a8e6a" stroke-width="1.1"/><rect x="1.1" y="4.1" width="12" height="2.4" fill="#3f7fc4"/><path d="M9.4 10.4 H13 V14" fill="none" stroke="#ecd58a"/><path d="M10.4 4.6 L13 0.6 L15.6 4.6 H14 V7.4 H12 V4.6 Z" fill="#fbe27a" stroke="#c29a30" stroke-width="0.8"/></svg><svg style="left:1211.0px;top:104.0px" width="16" height="15" viewBox="0 0 16 15"><rect x="0.6" y="4.6" width="12" height="9.8" fill="#fdfdfd" stroke="#7a8aa4" stroke-width="1.1"/><rect x="1.1" y="5.1" width="11" height="2.4" fill="#3f7fc4"/><path d="M8 10 L10.4 7.4" stroke="#666" stroke-width="1"/><path d="M9.6 5.6 L12.6 1.4 Q13.8 0.4 14.8 1.6 Q15.6 2.8 14.6 3.8 L11.4 7.4 Z" fill="#8e96a6" stroke="#5a6270" stroke-width="0.8"/></svg><div style="left:1229.0px;top:103.0px;width:1px;height:17px;background:#b8b8b8"></div><svg style="left:1232.6px;top:104.0px" width="17" height="15" viewBox="0 0 17 15"><path d="M1 7 Q1 2.4 6 2.4 H8.6 V0.6 L12.6 3.8 L8.6 7 V5.2 H6 Q3.8 5.2 3.8 7.4 Z" fill="#f8d860" stroke="#b88a20" stroke-width="0.8" stroke-linejoin="round"/><path d="M16 8 Q16 12.6 11 12.6 H8.4 V14.4 L4.4 11.2 L8.4 8 V9.8 H11 Q13.2 9.8 13.2 7.6 Z" fill="#f8d860" stroke="#b88a20" stroke-width="0.8" stroke-linejoin="round"/></svg>
<svg style="left:1261px;top:106px" width="10" height="7" viewBox="0 0 10 7"><path d="M0.5 1 H9.5" stroke="#7a7a7a" stroke-width="1.6"/><path d="M4.2 4.2 H5.6 V6 H4.2Z" fill="#7a7a7a"/></svg>
<svg style="left:1281.6px;top:77.6px" width="18" height="14" viewBox="0 0 18 14"><circle cx="3.7" cy="6.8" r="2.4" fill="none" stroke="#2d4566" stroke-width="1.25"/><circle cx="10.6" cy="6.8" r="2.4" fill="none" stroke="#2d4566" stroke-width="1.25"/><path d="M6 5.6 Q7.2 4.8 8.3 5.6" fill="none" stroke="#2d4566" stroke-width="1.1"/><path d="M1.6 5.6 Q3.4 1.4 6.2 0.8 Q7.6 1 7.8 2.6" fill="none" stroke="#2d4566" stroke-width="1.15"/><path d="M12.2 4.8 Q14 1.6 15.6 1.4 Q16.8 1.8 17 3.4" fill="none" stroke="#2d4566" stroke-width="1.15"/><path d="M6.2 10.6 H8.2 V13 H6.2Z" fill="#7d8aa0"/><path d="M10.6 11 H14.4 M10.6 12.8 H14.4" stroke="#2d4566" stroke-width="0.9"/></svg>
<span class="t" style="left:1302px;top:77.60px;letter-spacing:-0.670px;font-style:italic;">Expressions</span>
<svg style="left:1368.5px;top:79.5px" width="11" height="11" viewBox="0 0 11 11"><path d="M1 1.8 L1.8 1 L5.5 3.8 L9.2 1 L10 1.8 L7.2 5.5 L10 9.2 L9.2 10 L5.5 7.2 L1.8 10 L1 9.2 L3.8 5.5 Z" fill="#fdfdfd" stroke="#b4b4b4" stroke-width="0.9"/></svg>
<svg style="left:1391.2px;top:78.5px" width="17" height="13" viewBox="0 0 17 13"><text x="0.2" y="5.6" font-family="Liberation Sans, sans-serif" font-size="7.4" font-weight="bold" fill="#7686a2" textLength="15.6" lengthAdjust="spacingAndGlyphs">1010</text><text x="0.2" y="11.8" font-family="Liberation Sans, sans-serif" font-size="7.4" font-weight="bold" fill="#7686a2" textLength="15.6" lengthAdjust="spacingAndGlyphs">0101</text></svg>
<span class="t" style="left:1410.8px;top:77.60px;letter-spacing:-0.432px;">Registers</span>
<svg style="left:1469.2px;top:78.6px" width="14" height="13" viewBox="0 0 14 13"><rect x="0.6" y="0.6" width="12.6" height="11.4" fill="#eaf0fa" stroke="#4a78b8" stroke-width="1.1"/><rect x="1" y="1" width="11.8" height="2.2" fill="#5a8ad0"/><rect x="2.6" y="5" width="3.4" height="5" fill="none" stroke="#3a5a9a" stroke-width="1"/><rect x="7.6" y="5" width="3.2" height="2.6" fill="none" stroke="#3a5a9a" stroke-width="1"/><path d="M7.4 10 H11" stroke="#3a5a9a" stroke-width="1"/></svg>
<span class="t" style="left:1488px;top:77.60px;letter-spacing:0.198px;">Memory Map</span>
<svg style="left:1569.2px;top:77px" width="17" height="16" viewBox="0 0 17 16"><path d="M9.4 3.4 L14 0.6 L16.2 2.4 L15.6 6.4 L12.6 9.4 Z" fill="#f6d58a" stroke="#c8963c" stroke-width="0.8"/><circle cx="13.6" cy="3.6" r="0.9" fill="#7a5a2a"/><path d="M6.4 6.8 L9.4 3.4 L12.6 9.4 L9.6 12 Z" fill="#9a8e8a" stroke="#74685e" stroke-width="0.8"/><path d="M1.6 11.8 L6.4 6.8 L9.6 12 L4.6 15.6 Q2.6 15.8 1.6 14 Z" fill="#fbeeb8" stroke="#e6c87a" stroke-width="0.8"/></svg>
<span class="t" style="left:1589.6px;top:77.60px;letter-spacing:-0.489px;">Search</span>
<svg style="left:1650px;top:76.5px" width="10" height="5" viewBox="0 0 10 5"><rect x="0.5" y="0.5" width="9" height="3" fill="#fff" stroke="#b9b9b9"/></svg><svg style="left:1669.5px;top:77.5px" width="10" height="10" viewBox="0 0 10 10"><rect x="0.5" y="0.5" width="9" height="9" fill="#fff" stroke="#b9b9b9"/><path d="M0.5 2.5 H9.5" stroke="#b9b9b9"/></svg>
<div style="left:1457px;top:97px;width:232px;height:20.5px;background:#f3f3f3;"></div>
<svg style="left:1458.7px;top:99.0px" width="17" height="15" viewBox="0 0 17 15"><path d="M6.4 0.6 Q3 5 1 12 M1.6 1.6 Q5 3 7.4 9.6" fill="none" stroke="#a8a8a8" stroke-width="1.2"/><path d="M4.4 5.6 H15 Q16 5.6 16 6.6 V13.4 H3" fill="#f4f4f4" stroke="#bdbdbd" stroke-width="0.9"/><path d="M5 11.6 H6.6 M8 11.6 H9.6 M11 11.6 H12.6" stroke="#a8a8a8" stroke-width="1.2"/></svg><div class="hl" style="left:1476.3px;top:97.0px;width:20px;height:19px"></div><svg style="left:1478.3px;top:99.5px" width="16" height="14" viewBox="0 0 16 14"><path d="M0.6 5 H4.6 V2.6 L8.6 6.6 L4.6 10.6 V8.2 H0.6 Z" fill="#fbe27a" stroke="#c29a30" stroke-width="0.8"/><path d="M10 13.6 V3" stroke="#2f5fa8" stroke-width="1.3"/><path d="M7.6 4 L10 0.8 L12.4 4 Z" fill="#2f5fa8"/><rect x="11.6" y="5" width="3.4" height="2.6" fill="#e85a4a" stroke="#b8342a" stroke-width="0.6"/><rect x="11.6" y="10" width="3.4" height="2.6" fill="#e85a4a" stroke="#b8342a" stroke-width="0.6"/><path d="M10 6.4 H11.6 M10 11.4 H11.6" stroke="#2f5fa8"/></svg><svg style="left:1499.3px;top:100.0px" width="14" height="14" viewBox="0 0 14 14"><rect x="0.6" y="0.6" width="9.6" height="9.6" fill="#f4f7fc" stroke="#9ab0d0"/><rect x="3" y="3" width="10.2" height="10.2" fill="#fbfcfe" stroke="#7a98c4" stroke-width="1.1"/><path d="M5 8.2 H11.2" stroke="#2f5fa8" stroke-width="1.8"/></svg><div style="left:1516.3px;top:98.0px;width:1px;height:17px;background:#b8b8b8"></div><svg style="left:1522.3px;top:99.5px" width="14" height="14" viewBox="0 0 14 14"><path d="M4.8 0.8 H8.8 V4.8 H12.8 V8.8 H8.8 V12.8 H4.8 V8.8 H0.8 V4.8 H4.8 Z" fill="#8fd04a" stroke="#4a9a1c" stroke-width="1"/><path d="M6 2 H7.6 V6 H11.6" fill="none" stroke="#c8f09a" stroke-width="0.9"/></svg><svg style="left:1541.8999999999999px;top:100.0px" width="14" height="13" viewBox="0 0 14 13"><path d="M1 2.6 L2.8 0.8 L7 5 L11.2 0.8 L13 2.6 L8.8 6.6 L13 10.6 L11.2 12.4 L7 8.4 L2.8 12.4 L1 10.6 L5.2 6.6 Z" fill="#b0b0b0" stroke="#9e9e9e" stroke-width="0.6"/></svg><svg style="left:1559.8999999999999px;top:98.0px" width="17" height="17" viewBox="0 0 17 17"><path d="M1 2.4 L2.4 1 L5 3.6 L7.6 1 L9 2.4 L6.4 5 L9 7.6 L7.6 9 L5 6.4 L2.4 9 L1 7.6 L3.6 5 Z" fill="#7e7e7e" stroke="#4a4a4a" stroke-width="0.6" transform="translate(0.4,0.2) scale(1.05)"/><path d="M1 2.4 L2.4 1 L5 3.6 L7.6 1 L9 2.4 L6.4 5 L9 7.6 L7.6 9 L5 6.4 L2.4 9 L1 7.6 L3.6 5 Z" fill="#7e7e7e" stroke="#4a4a4a" stroke-width="0.6" transform="translate(5.4,5.4) scale(1.1)"/></svg><div class="hl" style="left:1577.8px;top:97.0px;width:20px;height:19px"></div><svg style="left:1579.7px;top:98.5px" width="17" height="16" viewBox="0 0 17 16"><path d="M3 1 H7 V8 H9.6 L5 14.6 L0.6 8 H3 Z" fill="#fbe27a" stroke="#c29a30" stroke-width="0.9" stroke-linejoin="round"/><path d="M9.6 13 V7 H7.4 L11.8 1 L16.2 7 H13.8 V13 Z" fill="#fbe27a" stroke="#c29a30" stroke-width="0.9" stroke-linejoin="round"/></svg><div style="left:1598.8px;top:98.0px;width:1px;height:17px;background:#b8b8b8"></div><svg style="left:1602.8999999999999px;top:99.0px" width="16" height="15" viewBox="0 0 16 15"><rect x="0.6" y="3.6" width="13" height="10.8" fill="#fdfdfd" stroke="#9a8e6a" stroke-width="1.1"/><rect x="1.1" y="4.1" width="12" height="2.4" fill="#3f7fc4"/><path d="M9.4 10.4 H13 V14" fill="none" stroke="#ecd58a"/><path d="M10.4 4.6 L13 0.6 L15.6 4.6 H14 V7.4 H12 V4.6 Z" fill="#fbe27a" stroke="#c29a30" stroke-width="0.8"/></svg><svg style="left:1623.3px;top:99.0px" width="16" height="15" viewBox="0 0 16 15"><rect x="0.6" y="4.6" width="12" height="9.8" fill="#fdfdfd" stroke="#7a8aa4" stroke-width="1.1"/><rect x="1.1" y="5.1" width="11" height="2.4" fill="#3f7fc4"/><path d="M8 10 L10.4 7.4" stroke="#666" stroke-width="1"/><path d="M9.6 5.6 L12.6 1.4 Q13.8 0.4 14.8 1.6 Q15.6 2.8 14.6 3.8 L11.4 7.4 Z" fill="#8e96a6" stroke="#5a6270" stroke-width="0.8"/></svg><div style="left:1641.3px;top:98.0px;width:1px;height:17px;background:#b8b8b8"></div><svg style="left:1644.8999999999999px;top:99.0px" width="17" height="15" viewBox="0 0 17 15"><path d="M1 7 Q1 2.4 6 2.4 H8.6 V0.6 L12.6 3.8 L8.6 7 V5.2 H6 Q3.8 5.2 3.8 7.4 Z" fill="#f8d860" stroke="#b88a20" stroke-width="0.8" stroke-linejoin="round"/><path d="M16 8 Q16 12.6 11 12.6 H8.4 V14.4 L4.4 11.2 L8.4 8 V9.8 H11 Q13.2 9.8 13.2 7.6 Z" fill="#f8d860" stroke="#b88a20" stroke-width="0.8" stroke-linejoin="round"/></svg>
<svg style="left:1674.5px;top:101px" width="10" height="7" viewBox="0 0 10 7"><path d="M0.5 1 H9.5" stroke="#7a7a7a" stroke-width="1.6"/><path d="M4.2 4.2 H5.6 V6 H4.2Z" fill="#7a7a7a"/></svg>
</section>
<section aria-label="Expressions tables" style="left:0;top:0">
<div style="left:865px;top:158px;width:395px;height:1px;background:#f1f1f1;"></div>
<div style="left:865px;top:176px;width:395px;height:1px;background:#f1f1f1;"></div>
<div style="left:865px;top:194px;width:395px;height:1px;background:#f1f1f1;"></div>
<div style="left:865px;top:211px;width:395px;height:1px;background:#f1f1f1;"></div>
<div style="left:865px;top:228px;width:395px;height:1px;background:#f1f1f1;"></div>
<div style="left:865px;top:246px;width:395px;height:1px;background:#f1f1f1;"></div>
<div style="left:865px;top:264px;width:395px;height:1px;background:#f1f1f1;"></div>
<div style="left:865px;top:281px;width:395px;height:1px;background:#f1f1f1;"></div>
<div style="left:865px;top:298px;width:395px;height:1px;background:#f1f1f1;"></div>
<div style="left:865px;top:316px;width:395px;height:1px;background:#f1f1f1;"></div>
<div style="left:865px;top:334px;width:395px;height:1px;background:#f1f1f1;"></div>
<div style="left:865px;top:351px;width:395px;height:1px;background:#f1f1f1;"></div>
<div style="left:865px;top:368px;width:395px;height:1px;background:#f1f1f1;"></div>
<div style="left:865px;top:386px;width:395px;height:1px;background:#f1f1f1;"></div>
<div style="left:865px;top:404px;width:395px;height:1px;background:#f1f1f1;"></div>
<div style="left:865px;top:421px;width:395px;height:1px;background:#f1f1f1;"></div>
<div style="left:865px;top:438px;width:395px;height:1px;background:#f1f1f1;"></div>
<div style="left:865px;top:456px;width:395px;height:1px;background:#f1f1f1;"></div>
<div style="left:865px;top:474px;width:395px;height:1px;background:#f1f1f1;"></div>
<div style="left:865px;top:491px;width:395px;height:1px;background:#f1f1f1;"></div>
<div style="left:865px;top:508px;width:395px;height:1px;background:#f1f1f1;"></div>
<div style="left:865px;top:526px;width:395px;height:1px;background:#f1f1f1;"></div>
<div style="left:865px;top:544px;width:395px;height:1px;background:#f1f1f1;"></div>
<div style="left:865px;top:561px;width:395px;height:1px;background:#f1f1f1;"></div>
<div style="left:865px;top:578px;width:395px;height:1px;background:#f1f1f1;"></div>
<div style="left:865px;top:596px;width:395px;height:1px;background:#f1f1f1;"></div>
<div style="left:865px;top:614px;width:395px;height:1px;background:#f1f1f1;"></div>
<div style="left:865px;top:631px;width:395px;height:1px;background:#f1f1f1;"></div>
<div style="left:1042px;top:124px;width:1px;height:509px;background:#e9e9e9;"></div>
<div style="left:1099px;top:124px;width:1px;height:509px;background:#e9e9e9;"></div>
<div style="left:1234px;top:124px;width:1px;height:509px;background:#e9e9e9;"></div>
<span class="t" style="left:869.5px;top:125.00px;letter-spacing:-0.388px;">Expression</span>
<span class="t" style="left:1045.5px;top:125.00px;letter-spacing:-0.379px;">Type</span>
<span class="t" style="left:1102.5px;top:125.00px;letter-spacing:-0.263px;">Value</span>
<div style="left:1235px;top:124px;width:25px;height:509px;overflow:hidden">
<span class="t" style="left:3px;top:1.00px;">Addr</span>
<span class="t" style="left:2.5px;top:19.40px;">0x0C</span>
<span class="t" style="left:2.5px;top:36.90px;">0x0C</span>
<span class="t" style="left:2.5px;top:54.40px;">0x0C</span>
<span class="t" style="left:2.5px;top:71.90px;">0x0C</span>
<span class="t" style="left:2.5px;top:89.40px;">0x0C</span>
<span class="t" style="left:2.5px;top:106.90px;">0x0C</span>
<span class="t" style="left:2.5px;top:124.40px;">0x0C</span>
<span class="t" style="left:2.5px;top:141.90px;">0x0C</span>
<span class="t" style="left:2.5px;top:159.40px;">0x0C</span>
<span class="t" style="left:2.5px;top:176.90px;">0x0C</span>
<span class="t" style="left:2.5px;top:194.40px;">0x0C</span>
<span class="t" style="left:2.5px;top:211.90px;">0x0C</span>
<span class="t" style="left:2.5px;top:229.40px;">0x0C</span>
<span class="t" style="left:2.5px;top:246.90px;">0x0C</span>
<span class="t" style="left:2.5px;top:264.40px;">0x0C</span>
<span class="t" style="left:2.5px;top:281.90px;">0x0C</span>
<span class="t" style="left:2.5px;top:299.40px;">0x0C</span>
<span class="t" style="left:2.5px;top:316.90px;">0x0C</span>
<span class="t" style="left:2.5px;top:334.40px;">0x0C</span>
<span class="t" style="left:2.5px;top:351.90px;">0x0C</span>
<span class="t" style="left:2.5px;top:369.40px;">0x0C</span>
<span class="t" style="left:2.5px;top:386.90px;">0x0C</span>
<span class="t" style="left:2.5px;top:404.40px;">0x0C</span>
<span class="t" style="left:2.5px;top:421.90px;">0x0C</span>
<span class="t" style="left:2.5px;top:439.40px;">0x0C</span>
<span class="t" style="left:2.5px;top:456.90px;">0x0C</span>
<span class="t" style="left:2.5px;top:474.40px;">0x0C</span>
<span class="t" style="left:2.5px;top:491.90px;">0x0C</span>
</div>
<div style="left:1099.5px;top:141.5px;width:134.5px;height:17px;background:#ffff00;"></div>
<svg style="left:901px;top:144.5px" width="16" height="12" viewBox="0 0 16 12"><text x="0" y="9.2" font-family="Liberation Sans, sans-serif" font-weight="bold" font-size="10.6" fill="#324a74" stroke="#324a74" stroke-width="0.35" textLength="11.8" lengthAdjust="spacingAndGlyphs">(x)</text><text x="12.1" y="8.4" font-family="Liberation Sans, sans-serif" font-weight="bold" font-size="7.4" fill="#7b90b4" textLength="3.2" lengthAdjust="spacingAndGlyphs">=</text></svg>
<span class="t" style="left:919px;top:143.40px;letter-spacing:-0.693px;">VdcBus_V</span>
<span class="t" style="left:1045px;top:143.40px;letter-spacing:0.163px;">float</span>
<span class="t" style="left:1102.5px;top:143.40px;letter-spacing:-0.291px;">133.191406</span>
<svg style="left:901px;top:162.0px" width="16" height="12" viewBox="0 0 16 12"><text x="0" y="9.2" font-family="Liberation Sans, sans-serif" font-weight="bold" font-size="10.6" fill="#324a74" stroke="#324a74" stroke-width="0.35" textLength="11.8" lengthAdjust="spacingAndGlyphs">(x)</text><text x="12.1" y="8.4" font-family="Liberation Sans, sans-serif" font-weight="bold" font-size="7.4" fill="#7b90b4" textLength="3.2" lengthAdjust="spacingAndGlyphs">=</text></svg>
<span class="t" style="left:919px;top:160.90px;letter-spacing:-0.524px;">IdRated_A</span>
<span class="t" style="left:1045px;top:160.90px;letter-spacing:0.163px;">float</span>
<span class="t" style="left:1102.5px;top:160.90px;letter-spacing:-0.562px;">0.0</span>
<svg style="left:901px;top:179.5px" width="16" height="12" viewBox="0 0 16 12"><text x="0" y="9.2" font-family="Liberation Sans, sans-serif" font-weight="bold" font-size="10.6" fill="#324a74" stroke="#324a74" stroke-width="0.35" textLength="11.8" lengthAdjust="spacingAndGlyphs">(x)</text><text x="12.1" y="8.4" font-family="Liberation Sans, sans-serif" font-weight="bold" font-size="7.4" fill="#7b90b4" textLength="3.2" lengthAdjust="spacingAndGlyphs">=</text></svg>
<span class="t" style="left:919px;top:178.40px;letter-spacing:-0.368px;">Id_target_A</span>
<span class="t" style="left:1045px;top:178.40px;letter-spacing:0.163px;">float</span>
<span class="t" style="left:1102.5px;top:178.40px;letter-spacing:-0.562px;">0.0</span>
<svg style="left:901px;top:197.0px" width="16" height="12" viewBox="0 0 16 12"><text x="0" y="9.2" font-family="Liberation Sans, sans-serif" font-weight="bold" font-size="10.6" fill="#324a74" stroke="#324a74" stroke-width="0.35" textLength="11.8" lengthAdjust="spacingAndGlyphs">(x)</text><text x="12.1" y="8.4" font-family="Liberation Sans, sans-serif" font-weight="bold" font-size="7.4" fill="#7b90b4" textLength="3.2" lengthAdjust="spacingAndGlyphs">=</text></svg>
<span class="t" style="left:919px;top:195.90px;letter-spacing:-1.004px;">Is_A</span>
<span class="t" style="left:1045px;top:195.90px;letter-spacing:0.163px;">float</span>
<span class="t" style="left:1102.5px;top:195.90px;letter-spacing:-0.562px;">0.0</span>
<svg style="left:901px;top:214.5px" width="16" height="12" viewBox="0 0 16 12"><text x="0" y="9.2" font-family="Liberation Sans, sans-serif" font-weight="bold" font-size="10.6" fill="#324a74" stroke="#324a74" stroke-width="0.35" textLength="11.8" lengthAdjust="spacingAndGlyphs">(x)</text><text x="12.1" y="8.4" font-family="Liberation Sans, sans-serif" font-weight="bold" font-size="7.4" fill="#7b90b4" textLength="3.2" lengthAdjust="spacingAndGlyphs">=</text></svg>
<span class="t" style="left:919px;top:213.40px;letter-spacing:-0.812px;">IsRef_A</span>
<span class="t" style="left:1045px;top:213.40px;letter-spacing:0.163px;">float</span>
<span class="t" style="left:1102.5px;top:213.40px;letter-spacing:-0.562px;">0.0</span>
<svg style="left:901px;top:232.0px" width="16" height="12" viewBox="0 0 16 12"><text x="0" y="9.2" font-family="Liberation Sans, sans-serif" font-weight="bold" font-size="10.6" fill="#324a74" stroke="#324a74" stroke-width="0.35" textLength="11.8" lengthAdjust="spacingAndGlyphs">(x)</text><text x="12.1" y="8.4" font-family="Liberation Sans, sans-serif" font-weight="bold" font-size="7.4" fill="#7b90b4" textLength="3.2" lengthAdjust="spacingAndGlyphs">=</text></svg>
<span class="t" style="left:919px;top:230.90px;letter-spacing:-0.150px;">angleCurrent_rad</span>
<span class="t" style="left:1045px;top:230.90px;letter-spacing:0.163px;">float</span>
<span class="t" style="left:1102.5px;top:230.90px;letter-spacing:-0.562px;">0.0</span>
<svg style="left:887px;top:253.8px" width="10" height="7" viewBox="0 0 10 7"><path d="M1 1 L5 5 L9 1" fill="none" stroke="#242424" stroke-width="1.9"/></svg>
<svg style="left:901px;top:248.5px" width="15.2" height="14" viewBox="0 0 15.2 14"><path d="M0.7 4 Q0.7 3 1.6 3 H5.4 V9 L1.4 13 H0.7 Z" fill="#fdf3d0" stroke="#c8983c" stroke-width="0.9"/><path d="M4.6 8.6 H14.6 L10.8 13.3 H0.9 Z" fill="#f9cd6e" stroke="#c08a2c" stroke-width="0.9" stroke-linejoin="round"/><path d="M2.4 12.4 L5 9.6 H12.4" fill="none" stroke="#fde9b0" stroke-width="0.8"/><path d="M5 7.6 V5.4 A5 5.2 0 0 1 15 5.4 V7.6 Z" fill="#2c69ba"/><path d="M5 5.6 H15 V7.7 H5 Z" fill="#5d9be2"/><path d="M6.4 3.4 A3.8 3.6 0 0 1 13.6 3.4" fill="none" stroke="#7fb2ea" stroke-width="0.7"/></svg>
<span class="t" style="left:919px;top:248.40px;letter-spacing:-0.439px;">offsets_I_A</span>
<span class="t" style="left:1045px;top:248.40px;letter-spacing:-0.152px;">struct M...</span>
<span class="t" style="left:1102.5px;top:248.40px;letter-spacing:-0.258px;">{value=[9.18584633,9.1...</span>
<svg style="left:903px;top:271.3px" width="10" height="7" viewBox="0 0 10 7"><path d="M1 1 L5 5 L9 1" fill="none" stroke="#242424" stroke-width="1.9"/></svg>
<svg style="left:917px;top:266.0px" width="15.2" height="14" viewBox="0 0 15.2 14"><path d="M0.7 4 Q0.7 3 1.6 3 H5.4 V9 L1.4 13 H0.7 Z" fill="#fdf3d0" stroke="#c8983c" stroke-width="0.9"/><path d="M4.6 8.6 H14.6 L10.8 13.3 H0.9 Z" fill="#f9cd6e" stroke="#c08a2c" stroke-width="0.9" stroke-linejoin="round"/><path d="M2.4 12.4 L5 9.6 H12.4" fill="none" stroke="#fde9b0" stroke-width="0.8"/><path d="M5 7.6 V5.4 A5 5.2 0 0 1 15 5.4 V7.6 Z" fill="#2c69ba"/><path d="M5 5.6 H15 V7.7 H5 Z" fill="#5d9be2"/><path d="M6.4 3.4 A3.8 3.6 0 0 1 13.6 3.4" fill="none" stroke="#7fb2ea" stroke-width="0.7"/></svg>
<span class="t" style="left:935px;top:265.90px;letter-spacing:-0.037px;">value</span>
<span class="t" style="left:1045px;top:265.90px;letter-spacing:0.184px;">float[3]</span>
<span class="t" style="left:1102.5px;top:265.90px;letter-spacing:-0.246px;">[9.18584633,9.1128091...</span>
<svg style="left:933px;top:284.5px" width="16" height="12" viewBox="0 0 16 12"><text x="0" y="9.2" font-family="Liberation Sans, sans-serif" font-weight="bold" font-size="10.6" fill="#324a74" stroke="#324a74" stroke-width="0.35" textLength="11.8" lengthAdjust="spacingAndGlyphs">(x)</text><text x="12.1" y="8.4" font-family="Liberation Sans, sans-serif" font-weight="bold" font-size="7.4" fill="#7b90b4" textLength="3.2" lengthAdjust="spacingAndGlyphs">=</text></svg>
<span class="t" style="left:951px;top:283.40px;letter-spacing:-0.281px;">[0]</span>
<span class="t" style="left:1045px;top:283.40px;letter-spacing:0.163px;">float</span>
<span class="t" style="left:1102.5px;top:283.40px;letter-spacing:-0.341px;">9.18584633</span>
<svg style="left:933px;top:302.0px" width="16" height="12" viewBox="0 0 16 12"><text x="0" y="9.2" font-family="Liberation Sans, sans-serif" font-weight="bold" font-size="10.6" fill="#324a74" stroke="#324a74" stroke-width="0.35" textLength="11.8" lengthAdjust="spacingAndGlyphs">(x)</text><text x="12.1" y="8.4" font-family="Liberation Sans, sans-serif" font-weight="bold" font-size="7.4" fill="#7b90b4" textLength="3.2" lengthAdjust="spacingAndGlyphs">=</text></svg>
<span class="t" style="left:951px;top:300.90px;letter-spacing:-0.281px;">[1]</span>
<span class="t" style="left:1045px;top:300.90px;letter-spacing:0.163px;">float</span>
<span class="t" style="left:1102.5px;top:300.90px;letter-spacing:-0.252px;">9.11280918</span>
<svg style="left:933px;top:319.5px" width="16" height="12" viewBox="0 0 16 12"><text x="0" y="9.2" font-family="Liberation Sans, sans-serif" font-weight="bold" font-size="10.6" fill="#324a74" stroke="#324a74" stroke-width="0.35" textLength="11.8" lengthAdjust="spacingAndGlyphs">(x)</text><text x="12.1" y="8.4" font-family="Liberation Sans, sans-serif" font-weight="bold" font-size="7.4" fill="#7b90b4" textLength="3.2" lengthAdjust="spacingAndGlyphs">=</text></svg>
<span class="t" style="left:951px;top:318.40px;letter-spacing:-0.281px;">[2]</span>
<span class="t" style="left:1045px;top:318.40px;letter-spacing:0.163px;">float</span>
<span class="t" style="left:1102.5px;top:318.40px;letter-spacing:-0.219px;">-18.2986164</span>
<svg style="left:887px;top:341.3px" width="10" height="7" viewBox="0 0 10 7"><path d="M1 1 L5 5 L9 1" fill="none" stroke="#242424" stroke-width="1.9"/></svg>
<svg style="left:901px;top:336.0px" width="15.2" height="14" viewBox="0 0 15.2 14"><path d="M0.7 4 Q0.7 3 1.6 3 H5.4 V9 L1.4 13 H0.7 Z" fill="#fdf3d0" stroke="#c8983c" stroke-width="0.9"/><path d="M4.6 8.6 H14.6 L10.8 13.3 H0.9 Z" fill="#f9cd6e" stroke="#c08a2c" stroke-width="0.9" stroke-linejoin="round"/><path d="M2.4 12.4 L5 9.6 H12.4" fill="none" stroke="#fde9b0" stroke-width="0.8"/><path d="M5 7.6 V5.4 A5 5.2 0 0 1 15 5.4 V7.6 Z" fill="#2c69ba"/><path d="M5 5.6 H15 V7.7 H5 Z" fill="#5d9be2"/><path d="M6.4 3.4 A3.8 3.6 0 0 1 13.6 3.4" fill="none" stroke="#7fb2ea" stroke-width="0.7"/></svg>
<span class="t" style="left:919px;top:335.90px;letter-spacing:-0.409px;">offsets_V_V</span>
<span class="t" style="left:1045px;top:335.90px;letter-spacing:-0.152px;">struct M...</span>
<span class="t" style="left:1102.5px;top:335.90px;letter-spacing:-0.223px;">{value=[1.00636113,1.0...</span>
<svg style="left:903px;top:358.8px" width="10" height="7" viewBox="0 0 10 7"><path d="M1 1 L5 5 L9 1" fill="none" stroke="#242424" stroke-width="1.9"/></svg>
<svg style="left:917px;top:353.5px" width="15.2" height="14" viewBox="0 0 15.2 14"><path d="M0.7 4 Q0.7 3 1.6 3 H5.4 V9 L1.4 13 H0.7 Z" fill="#fdf3d0" stroke="#c8983c" stroke-width="0.9"/><path d="M4.6 8.6 H14.6 L10.8 13.3 H0.9 Z" fill="#f9cd6e" stroke="#c08a2c" stroke-width="0.9" stroke-linejoin="round"/><path d="M2.4 12.4 L5 9.6 H12.4" fill="none" stroke="#fde9b0" stroke-width="0.8"/><path d="M5 7.6 V5.4 A5 5.2 0 0 1 15 5.4 V7.6 Z" fill="#2c69ba"/><path d="M5 5.6 H15 V7.7 H5 Z" fill="#5d9be2"/><path d="M6.4 3.4 A3.8 3.6 0 0 1 13.6 3.4" fill="none" stroke="#7fb2ea" stroke-width="0.7"/></svg>
<span class="t" style="left:935px;top:353.40px;letter-spacing:-0.037px;">value</span>
<span class="t" style="left:1045px;top:353.40px;letter-spacing:0.184px;">float[3]</span>
<span class="t" style="left:1102.5px;top:353.40px;letter-spacing:-0.246px;">[1.00636113,1.0130512...</span>
<svg style="left:933px;top:372.0px" width="16" height="12" viewBox="0 0 16 12"><text x="0" y="9.2" font-family="Liberation Sans, sans-serif" font-weight="bold" font-size="10.6" fill="#324a74" stroke="#324a74" stroke-width="0.35" textLength="11.8" lengthAdjust="spacingAndGlyphs">(x)</text><text x="12.1" y="8.4" font-family="Liberation Sans, sans-serif" font-weight="bold" font-size="7.4" fill="#7b90b4" textLength="3.2" lengthAdjust="spacingAndGlyphs">=</text></svg>
<span class="t" style="left:951px;top:370.90px;letter-spacing:-0.281px;">[0]</span>
<span class="t" style="left:1045px;top:370.90px;letter-spacing:0.163px;">float</span>
<span class="t" style="left:1102.5px;top:370.90px;letter-spacing:-0.252px;">1.00636113</span>
<svg style="left:933px;top:389.5px" width="16" height="12" viewBox="0 0 16 12"><text x="0" y="9.2" font-family="Liberation Sans, sans-serif" font-weight="bold" font-size="10.6" fill="#324a74" stroke="#324a74" stroke-width="0.35" textLength="11.8" lengthAdjust="spacingAndGlyphs">(x)</text><text x="12.1" y="8.4" font-family="Liberation Sans, sans-serif" font-weight="bold" font-size="7.4" fill="#7b90b4" textLength="3.2" lengthAdjust="spacingAndGlyphs">=</text></svg>
<span class="t" style="left:951px;top:388.40px;letter-spacing:-0.281px;">[1]</span>
<span class="t" style="left:1045px;top:388.40px;letter-spacing:0.163px;">float</span>
<span class="t" style="left:1102.5px;top:388.40px;letter-spacing:-0.341px;">1.01305127</span>
<svg style="left:933px;top:407.0px" width="16" height="12" viewBox="0 0 16 12"><text x="0" y="9.2" font-family="Liberation Sans, sans-serif" font-weight="bold" font-size="10.6" fill="#324a74" stroke="#324a74" stroke-width="0.35" textLength="11.8" lengthAdjust="spacingAndGlyphs">(x)</text><text x="12.1" y="8.4" font-family="Liberation Sans, sans-serif" font-weight="bold" font-size="7.4" fill="#7b90b4" textLength="3.2" lengthAdjust="spacingAndGlyphs">=</text></svg>
<span class="t" style="left:951px;top:405.90px;letter-spacing:-0.281px;">[2]</span>
<span class="t" style="left:1045px;top:405.90px;letter-spacing:0.163px;">float</span>
<span class="t" style="left:1102.5px;top:405.90px;letter-spacing:-0.341px;">1.01217067</span>
<svg style="left:901px;top:424.5px" width="16" height="12" viewBox="0 0 16 12"><text x="0" y="9.2" font-family="Liberation Sans, sans-serif" font-weight="bold" font-size="10.6" fill="#324a74" stroke="#324a74" stroke-width="0.35" textLength="11.8" lengthAdjust="spacingAndGlyphs">(x)</text><text x="12.1" y="8.4" font-family="Liberation Sans, sans-serif" font-weight="bold" font-size="7.4" fill="#7b90b4" textLength="3.2" lengthAdjust="spacingAndGlyphs">=</text></svg>
<span class="t" style="left:919px;top:423.40px;letter-spacing:-0.132px;">offset_invVbus_invV</span>
<span class="t" style="left:1045px;top:423.40px;letter-spacing:0.163px;">float</span>
<span class="t" style="left:1102.5px;top:423.40px;letter-spacing:-0.562px;">0.5</span>
<div style="left:1099.5px;top:439.0px;width:134.5px;height:17px;background:#ffff00;"></div>
<svg style="left:901px;top:442.0px" width="16" height="12" viewBox="0 0 16 12"><text x="0" y="9.2" font-family="Liberation Sans, sans-serif" font-weight="bold" font-size="10.6" fill="#324a74" stroke="#324a74" stroke-width="0.35" textLength="11.8" lengthAdjust="spacingAndGlyphs">(x)</text><text x="12.1" y="8.4" font-family="Liberation Sans, sans-serif" font-weight="bold" font-size="7.4" fill="#7b90b4" textLength="3.2" lengthAdjust="spacingAndGlyphs">=</text></svg>
<span class="t" style="left:919px;top:440.90px;letter-spacing:-0.551px;">Vbus_sf</span>
<span class="t" style="left:1045px;top:440.90px;letter-spacing:0.163px;">float</span>
<span class="t" style="left:1102.5px;top:440.90px;letter-spacing:-0.341px;">66.5957031</span>
<svg style="left:901px;top:459.5px" width="16" height="12" viewBox="0 0 16 12"><text x="0" y="9.2" font-family="Liberation Sans, sans-serif" font-weight="bold" font-size="10.6" fill="#324a74" stroke="#324a74" stroke-width="0.35" textLength="11.8" lengthAdjust="spacingAndGlyphs">(x)</text><text x="12.1" y="8.4" font-family="Liberation Sans, sans-serif" font-weight="bold" font-size="7.4" fill="#7b90b4" textLength="3.2" lengthAdjust="spacingAndGlyphs">=</text></svg>
<span class="t" style="left:919px;top:458.40px;letter-spacing:-0.213px;">power_sf</span>
<span class="t" style="left:1045px;top:458.40px;letter-spacing:0.163px;">float</span>
<span class="t" style="left:1102.5px;top:458.40px;letter-spacing:-0.562px;">0.0</span>
<svg style="left:901px;top:477.0px" width="16" height="12" viewBox="0 0 16 12"><text x="0" y="9.2" font-family="Liberation Sans, sans-serif" font-weight="bold" font-size="10.6" fill="#324a74" stroke="#324a74" stroke-width="0.35" textLength="11.8" lengthAdjust="spacingAndGlyphs">(x)</text><text x="12.1" y="8.4" font-family="Liberation Sans, sans-serif" font-weight="bold" font-size="7.4" fill="#7b90b4" textLength="3.2" lengthAdjust="spacingAndGlyphs">=</text></svg>
<span class="t" style="left:919px;top:475.90px;letter-spacing:-0.241px;">power_W</span>
<span class="t" style="left:1045px;top:475.90px;letter-spacing:0.163px;">float</span>
<span class="t" style="left:1102.5px;top:475.90px;letter-spacing:-0.562px;">0.0</span>
<svg style="left:901px;top:494.5px" width="16" height="12" viewBox="0 0 16 12"><text x="0" y="9.2" font-family="Liberation Sans, sans-serif" font-weight="bold" font-size="10.6" fill="#324a74" stroke="#324a74" stroke-width="0.35" textLength="11.8" lengthAdjust="spacingAndGlyphs">(x)</text><text x="12.1" y="8.4" font-family="Liberation Sans, sans-serif" font-weight="bold" font-size="7.4" fill="#7b90b4" textLength="3.2" lengthAdjust="spacingAndGlyphs">=</text></svg>
<span class="t" style="left:919px;top:493.40px;letter-spacing:-0.369px;">IsFilter_A</span>
<span class="t" style="left:1045px;top:493.40px;letter-spacing:0.163px;">float</span>
<span class="t" style="left:1102.5px;top:493.40px;letter-spacing:-0.562px;">0.0</span>
<svg style="left:901px;top:512.0px" width="16" height="12" viewBox="0 0 16 12"><text x="0" y="9.2" font-family="Liberation Sans, sans-serif" font-weight="bold" font-size="10.6" fill="#324a74" stroke="#324a74" stroke-width="0.35" textLength="11.8" lengthAdjust="spacingAndGlyphs">(x)</text><text x="12.1" y="8.4" font-family="Liberation Sans, sans-serif" font-weight="bold" font-size="7.4" fill="#7b90b4" textLength="3.2" lengthAdjust="spacingAndGlyphs">=</text></svg>
<span class="t" style="left:919px;top:510.90px;letter-spacing:-0.336px;">VsFilter_V</span>
<span class="t" style="left:1045px;top:510.90px;letter-spacing:0.163px;">float</span>
<span class="t" style="left:1102.5px;top:510.90px;letter-spacing:-0.562px;">0.0</span>
<svg style="left:901px;top:529.5px" width="16" height="12" viewBox="0 0 16 12"><text x="0" y="9.2" font-family="Liberation Sans, sans-serif" font-weight="bold" font-size="10.6" fill="#324a74" stroke="#324a74" stroke-width="0.35" textLength="11.8" lengthAdjust="spacingAndGlyphs">(x)</text><text x="12.1" y="8.4" font-family="Liberation Sans, sans-serif" font-weight="bold" font-size="7.4" fill="#7b90b4" textLength="3.2" lengthAdjust="spacingAndGlyphs">=</text></svg>
<span class="t" style="left:919px;top:528.40px;letter-spacing:-0.225px;">VbusFilter_V</span>
<span class="t" style="left:1045px;top:528.40px;letter-spacing:0.163px;">float</span>
<span class="t" style="left:1102.5px;top:528.40px;letter-spacing:-0.562px;">0.0</span>
<svg style="left:901px;top:547.0px" width="16" height="12" viewBox="0 0 16 12"><text x="0" y="9.2" font-family="Liberation Sans, sans-serif" font-weight="bold" font-size="10.6" fill="#324a74" stroke="#324a74" stroke-width="0.35" textLength="11.8" lengthAdjust="spacingAndGlyphs">(x)</text><text x="12.1" y="8.4" font-family="Liberation Sans, sans-serif" font-weight="bold" font-size="7.4" fill="#7b90b4" textLength="3.2" lengthAdjust="spacingAndGlyphs">=</text></svg>
<span class="t" style="left:919px;top:545.90px;letter-spacing:-0.505px;">IqRefAbs_A</span>
<span class="t" style="left:1045px;top:545.90px;letter-spacing:0.163px;">float</span>
<span class="t" style="left:1102.5px;top:545.90px;letter-spacing:-0.562px;">0.0</span>
<svg style="left:901px;top:564.5px" width="16" height="12" viewBox="0 0 16 12"><text x="0" y="9.2" font-family="Liberation Sans, sans-serif" font-weight="bold" font-size="10.6" fill="#324a74" stroke="#324a74" stroke-width="0.35" textLength="11.8" lengthAdjust="spacingAndGlyphs">(x)</text><text x="12.1" y="8.4" font-family="Liberation Sans, sans-serif" font-weight="bold" font-size="7.4" fill="#7b90b4" textLength="3.2" lengthAdjust="spacingAndGlyphs">=</text></svg>
<span class="t" style="left:919px;top:563.40px;letter-spacing:-0.455px;">IqFdbAbs_A</span>
<span class="t" style="left:1045px;top:563.40px;letter-spacing:0.163px;">float</span>
<span class="t" style="left:1102.5px;top:563.40px;letter-spacing:-0.562px;">0.0</span>
<svg style="left:901px;top:582.0px" width="16" height="12" viewBox="0 0 16 12"><text x="0" y="9.2" font-family="Liberation Sans, sans-serif" font-weight="bold" font-size="10.6" fill="#324a74" stroke="#324a74" stroke-width="0.35" textLength="11.8" lengthAdjust="spacingAndGlyphs">(x)</text><text x="12.1" y="8.4" font-family="Liberation Sans, sans-serif" font-weight="bold" font-size="7.4" fill="#7b90b4" textLength="3.2" lengthAdjust="spacingAndGlyphs">=</text></svg>
<span class="t" style="left:919px;top:580.90px;letter-spacing:-0.385px;">speedFdbAbs_Hz</span>
<span class="t" style="left:1045px;top:580.90px;letter-spacing:0.163px;">float</span>
<span class="t" style="left:1102.5px;top:580.90px;letter-spacing:-0.562px;">0.0</span>
<svg style="left:901px;top:599.5px" width="16" height="12" viewBox="0 0 16 12"><text x="0" y="9.2" font-family="Liberation Sans, sans-serif" font-weight="bold" font-size="10.6" fill="#324a74" stroke="#324a74" stroke-width="0.35" textLength="11.8" lengthAdjust="spacingAndGlyphs">(x)</text><text x="12.1" y="8.4" font-family="Liberation Sans, sans-serif" font-weight="bold" font-size="7.4" fill="#7b90b4" textLength="3.2" lengthAdjust="spacingAndGlyphs">=</text></svg>
<span class="t" style="left:919px;top:598.40px;letter-spacing:-0.421px;">speedRefAbs_Hz</span>
<span class="t" style="left:1045px;top:598.40px;letter-spacing:0.163px;">float</span>
<span class="t" style="left:1102.5px;top:598.40px;letter-spacing:-0.562px;">0.0</span>
<svg style="left:901px;top:617.0px" width="16" height="12" viewBox="0 0 16 12"><text x="0" y="9.2" font-family="Liberation Sans, sans-serif" font-weight="bold" font-size="10.6" fill="#324a74" stroke="#324a74" stroke-width="0.35" textLength="11.8" lengthAdjust="spacingAndGlyphs">(x)</text><text x="12.1" y="8.4" font-family="Liberation Sans, sans-serif" font-weight="bold" font-size="7.4" fill="#7b90b4" textLength="3.2" lengthAdjust="spacingAndGlyphs">=</text></svg>
<span class="t" style="left:919px;top:615.90px;letter-spacing:-0.296px;">speedRefDelta_Hz</span>
<span class="t" style="left:1045px;top:615.90px;letter-spacing:0.163px;">float</span>
<span class="t" style="left:1102.5px;top:615.90px;letter-spacing:-0.562px;">0.0</span>
<div style="left:1260px;top:124px;width:16px;height:509px;background:#f0f0f0;"></div>
<div style="left:1261px;top:305px;width:13.5px;height:76px;background:#cdcdcd;"></div>
<svg style="left:1264.0px;top:129px" width="8" height="6.4" viewBox="0 0 8 6.4"><path d="M1 4.8 L4 1.6 L7 4.8" fill="none" stroke="#505050" stroke-width="1.5"/></svg>
<svg style="left:1264.0px;top:621px" width="8" height="6.4" viewBox="0 0 8 6.4"><path d="M1 1.4 L4 4.6 L7 1.4" fill="none" stroke="#505050" stroke-width="1.5"/></svg>
<div style="left:865px;top:633px;width:411px;height:17.5px;background:#f0f0f0;"></div>
<div style="left:883.5px;top:634px;width:334.5px;height:15.5px;background:#cdcdcd;"></div>
<svg style="left:872.0px;top:638px" width="6.4" height="8" viewBox="0 0 6.4 8"><path d="M4.8 1 L1.6 4 L4.8 7" fill="none" stroke="#505050" stroke-width="1.5"/></svg>
<svg style="left:1247px;top:638px" width="6.4" height="8" viewBox="0 0 6.4 8"><path d="M1.4 1 L4.6 4 L1.4 7" fill="none" stroke="#505050" stroke-width="1.5"/></svg>
<div style="left:1282px;top:154px;width:391px;height:1px;background:#f1f1f1;"></div>
<div style="left:1282px;top:171px;width:391px;height:1px;background:#f1f1f1;"></div>
<div style="left:1282px;top:188px;width:391px;height:1px;background:#f1f1f1;"></div>
<div style="left:1282px;top:206px;width:391px;height:1px;background:#f1f1f1;"></div>
<div style="left:1282px;top:224px;width:391px;height:1px;background:#f1f1f1;"></div>
<div style="left:1282px;top:241px;width:391px;height:1px;background:#f1f1f1;"></div>
<div style="left:1282px;top:258px;width:391px;height:1px;background:#f1f1f1;"></div>
<div style="left:1282px;top:276px;width:391px;height:1px;background:#f1f1f1;"></div>
<div style="left:1282px;top:294px;width:391px;height:1px;background:#f1f1f1;"></div>
<div style="left:1282px;top:311px;width:391px;height:1px;background:#f1f1f1;"></div>
<div style="left:1282px;top:328px;width:391px;height:1px;background:#f1f1f1;"></div>
<div style="left:1282px;top:346px;width:391px;height:1px;background:#f1f1f1;"></div>
<div style="left:1282px;top:364px;width:391px;height:1px;background:#f1f1f1;"></div>
<div style="left:1282px;top:381px;width:391px;height:1px;background:#f1f1f1;"></div>
<div style="left:1282px;top:398px;width:391px;height:1px;background:#f1f1f1;"></div>
<div style="left:1282px;top:416px;width:391px;height:1px;background:#f1f1f1;"></div>
<div style="left:1282px;top:434px;width:391px;height:1px;background:#f1f1f1;"></div>
<div style="left:1282px;top:451px;width:391px;height:1px;background:#f1f1f1;"></div>
<div style="left:1282px;top:468px;width:391px;height:1px;background:#f1f1f1;"></div>
<div style="left:1282px;top:486px;width:391px;height:1px;background:#f1f1f1;"></div>
<div style="left:1282px;top:504px;width:391px;height:1px;background:#f1f1f1;"></div>
<div style="left:1282px;top:521px;width:391px;height:1px;background:#f1f1f1;"></div>
<div style="left:1282px;top:538px;width:391px;height:1px;background:#f1f1f1;"></div>
<div style="left:1282px;top:556px;width:391px;height:1px;background:#f1f1f1;"></div>
<div style="left:1282px;top:574px;width:391px;height:1px;background:#f1f1f1;"></div>
<div style="left:1282px;top:591px;width:391px;height:1px;background:#f1f1f1;"></div>
<div style="left:1282px;top:608px;width:391px;height:1px;background:#f1f1f1;"></div>
<div style="left:1282px;top:626px;width:391px;height:1px;background:#f1f1f1;"></div>
<div style="left:1454px;top:119px;width:1px;height:509px;background:#e9e9e9;"></div>
<div style="left:1512px;top:119px;width:1px;height:509px;background:#e9e9e9;"></div>
<div style="left:1647px;top:119px;width:1px;height:509px;background:#e9e9e9;"></div>
<span class="t" style="left:1282.6px;top:119.40px;letter-spacing:-0.388px;">Expression</span>
<span class="t" style="left:1457.5px;top:119.40px;letter-spacing:-0.379px;">Type</span>
<span class="t" style="left:1515.5px;top:119.40px;letter-spacing:-0.263px;">Value</span>
<div style="left:1648px;top:119px;width:25px;height:509px;overflow:hidden">
<span class="t" style="left:3px;top:0.40px;">Addr</span>
<span class="t" style="left:2.5px;top:124.10px;">0x0C</span>
<span class="t" style="left:2.5px;top:141.60px;">0x0C</span>
<span class="t" style="left:2.5px;top:159.10px;">0x0C</span>
<span class="t" style="left:2.5px;top:176.60px;">0x0C</span>
<span class="t" style="left:2.5px;top:194.10px;">0x0C</span>
<span class="t" style="left:2.5px;top:211.60px;">0x0C</span>
<span class="t" style="left:2.5px;top:229.10px;">0x0C</span>
<span class="t" style="left:2.5px;top:246.60px;">0x0C</span>
<span class="t" style="left:2.5px;top:264.10px;">0x0C</span>
<span class="t" style="left:2.5px;top:281.60px;">0x0C</span>
<span class="t" style="left:2.5px;top:299.10px;">0x0C</span>
<span class="t" style="left:2.5px;top:316.60px;">0x0C</span>
<span class="t" style="left:2.5px;top:334.10px;">0x0C</span>
<span class="t" style="left:2.5px;top:351.60px;">0x0C</span>
<span class="t" style="left:2.5px;top:369.10px;">0x0C</span>
<span class="t" style="left:2.5px;top:386.60px;">0x0C</span>
<span class="t" style="left:2.5px;top:421.60px;">0x0C</span>
<span class="t" style="left:2.5px;top:439.10px;">0x0C</span>
<span class="t" style="left:2.5px;top:456.60px;">0x0C</span>
<span class="t" style="left:2.5px;top:474.10px;">0x0C</span>
<span class="t" style="left:2.5px;top:491.60px;">0x0C</span>
</div>
<svg style="left:1297.5px;top:139.5px" width="16" height="12" viewBox="0 0 16 12"><text x="0" y="9.2" font-family="Liberation Sans, sans-serif" font-weight="bold" font-size="10.6" fill="#324a74" stroke="#324a74" stroke-width="0.35" textLength="11.8" lengthAdjust="spacingAndGlyphs">(x)</text><text x="12.1" y="8.4" font-family="Liberation Sans, sans-serif" font-weight="bold" font-size="7.4" fill="#7b90b4" textLength="3.2" lengthAdjust="spacingAndGlyphs">=</text></svg>
<span class="t" style="left:1315.5px;top:138.10px;letter-spacing:-0.219px;">vib_comp_reserved</span>
<span class="t" style="left:1457px;top:138.10px;letter-spacing:0.136px;">unknown</span>
<span class="t" style="left:1515.5px;top:138.10px;color:#d8181f;letter-spacing:0.108px;">identifier not found: vi...</span>
<svg style="left:1297.5px;top:157.0px" width="16" height="12" viewBox="0 0 16 12"><text x="0" y="9.2" font-family="Liberation Sans, sans-serif" font-weight="bold" font-size="10.6" fill="#324a74" stroke="#324a74" stroke-width="0.35" textLength="11.8" lengthAdjust="spacingAndGlyphs">(x)</text><text x="12.1" y="8.4" font-family="Liberation Sans, sans-serif" font-weight="bold" font-size="7.4" fill="#7b90b4" textLength="3.2" lengthAdjust="spacingAndGlyphs">=</text></svg>
<span class="t" style="left:1315.5px;top:155.60px;letter-spacing:-0.064px;">vib_compHandle</span>
<span class="t" style="left:1457px;top:155.60px;letter-spacing:0.136px;">unknown</span>
<span class="t" style="left:1515.5px;top:155.60px;color:#d8181f;letter-spacing:0.108px;">identifier not found: vi...</span>
<svg style="left:1297.5px;top:174.5px" width="16" height="12" viewBox="0 0 16 12"><text x="0" y="9.2" font-family="Liberation Sans, sans-serif" font-weight="bold" font-size="10.6" fill="#324a74" stroke="#324a74" stroke-width="0.35" textLength="11.8" lengthAdjust="spacingAndGlyphs">(x)</text><text x="12.1" y="8.4" font-family="Liberation Sans, sans-serif" font-weight="bold" font-size="7.4" fill="#7b90b4" textLength="3.2" lengthAdjust="spacingAndGlyphs">=</text></svg>
<span class="t" style="left:1315.5px;top:173.10px;letter-spacing:-0.201px;">vib_angle_pu</span>
<span class="t" style="left:1457px;top:173.10px;letter-spacing:0.136px;">unknown</span>
<span class="t" style="left:1515.5px;top:173.10px;color:#d8181f;letter-spacing:0.108px;">identifier not found: vi...</span>
<svg style="left:1297.5px;top:192.0px" width="16" height="12" viewBox="0 0 16 12"><text x="0" y="9.2" font-family="Liberation Sans, sans-serif" font-weight="bold" font-size="10.6" fill="#324a74" stroke="#324a74" stroke-width="0.35" textLength="11.8" lengthAdjust="spacingAndGlyphs">(x)</text><text x="12.1" y="8.4" font-family="Liberation Sans, sans-serif" font-weight="bold" font-size="7.4" fill="#7b90b4" textLength="3.2" lengthAdjust="spacingAndGlyphs">=</text></svg>
<span class="t" style="left:1315.5px;top:190.60px;letter-spacing:-0.251px;">gAbsAngle_elec_pu</span>
<span class="t" style="left:1457px;top:190.60px;letter-spacing:0.136px;">unknown</span>
<span class="t" style="left:1515.5px;top:190.60px;color:#d8181f;letter-spacing:0.131px;">identifier not found: g...</span>
<svg style="left:1297.5px;top:209.5px" width="16" height="12" viewBox="0 0 16 12"><text x="0" y="9.2" font-family="Liberation Sans, sans-serif" font-weight="bold" font-size="10.6" fill="#324a74" stroke="#324a74" stroke-width="0.35" textLength="11.8" lengthAdjust="spacingAndGlyphs">(x)</text><text x="12.1" y="8.4" font-family="Liberation Sans, sans-serif" font-weight="bold" font-size="7.4" fill="#7b90b4" textLength="3.2" lengthAdjust="spacingAndGlyphs">=</text></svg>
<span class="t" style="left:1315.5px;top:208.10px;letter-spacing:-0.211px;">gAbsAngle_mech_pu</span>
<span class="t" style="left:1457px;top:208.10px;letter-spacing:0.136px;">unknown</span>
<span class="t" style="left:1515.5px;top:208.10px;color:#d8181f;letter-spacing:0.131px;">identifier not found: g...</span>
<svg style="left:1297.5px;top:227.0px" width="16" height="12" viewBox="0 0 16 12"><text x="0" y="9.2" font-family="Liberation Sans, sans-serif" font-weight="bold" font-size="10.6" fill="#324a74" stroke="#324a74" stroke-width="0.35" textLength="11.8" lengthAdjust="spacingAndGlyphs">(x)</text><text x="12.1" y="8.4" font-family="Liberation Sans, sans-serif" font-weight="bold" font-size="7.4" fill="#7b90b4" textLength="3.2" lengthAdjust="spacingAndGlyphs">=</text></svg>
<span class="t" style="left:1315.5px;top:225.60px;letter-spacing:-0.286px;">vib_refValue_A</span>
<span class="t" style="left:1457px;top:225.60px;letter-spacing:0.136px;">unknown</span>
<span class="t" style="left:1515.5px;top:225.60px;color:#d8181f;letter-spacing:0.108px;">identifier not found: vi...</span>
<svg style="left:1297.5px;top:244.5px" width="16" height="12" viewBox="0 0 16 12"><text x="0" y="9.2" font-family="Liberation Sans, sans-serif" font-weight="bold" font-size="10.6" fill="#324a74" stroke="#324a74" stroke-width="0.35" textLength="11.8" lengthAdjust="spacingAndGlyphs">(x)</text><text x="12.1" y="8.4" font-family="Liberation Sans, sans-serif" font-weight="bold" font-size="7.4" fill="#7b90b4" textLength="3.2" lengthAdjust="spacingAndGlyphs">=</text></svg>
<span class="t" style="left:1315.5px;top:243.10px;letter-spacing:-0.245px;">Idq_ref_A.value[1]</span>
<span class="t" style="left:1457px;top:243.10px;letter-spacing:0.163px;">float</span>
<span class="t" style="left:1515.5px;top:243.10px;letter-spacing:-0.562px;">0.0</span>
<div style="left:1512.5px;top:259.0px;width:134.5px;height:17.6px;background:#ffff00;"></div>
<svg style="left:1283.5px;top:266.3px" width="10" height="7" viewBox="0 0 10 7"><path d="M1 1 L5 5 L9 1" fill="none" stroke="#242424" stroke-width="1.9"/></svg>
<svg style="left:1297.5px;top:261.0px" width="15.2" height="14" viewBox="0 0 15.2 14"><path d="M0.7 4 Q0.7 3 1.6 3 H5.4 V9 L1.4 13 H0.7 Z" fill="#fdf3d0" stroke="#c8983c" stroke-width="0.9"/><path d="M4.6 8.6 H14.6 L10.8 13.3 H0.9 Z" fill="#f9cd6e" stroke="#c08a2c" stroke-width="0.9" stroke-linejoin="round"/><path d="M2.4 12.4 L5 9.6 H12.4" fill="none" stroke="#fde9b0" stroke-width="0.8"/><path d="M5 7.6 V5.4 A5 5.2 0 0 1 15 5.4 V7.6 Z" fill="#2c69ba"/><path d="M5 5.6 H15 V7.7 H5 Z" fill="#5d9be2"/><path d="M6.4 3.4 A3.8 3.6 0 0 1 13.6 3.4" fill="none" stroke="#7fb2ea" stroke-width="0.7"/></svg>
<span class="t" style="left:1315.5px;top:260.60px;letter-spacing:-0.315px;">adcData</span>
<span class="t" style="left:1457px;top:260.60px;letter-spacing:-0.213px;">struct H...</span>
<span class="t" style="left:1515.5px;top:260.60px;letter-spacing:-0.285px;">{I_A={value=[-0.009048...</span>
<div style="left:1512.5px;top:276.5px;width:134.5px;height:17.6px;background:#ffff00;"></div>
<svg style="left:1299.5px;top:283.8px" width="10" height="7" viewBox="0 0 10 7"><path d="M1 1 L5 5 L9 1" fill="none" stroke="#242424" stroke-width="1.9"/></svg>
<svg style="left:1313.5px;top:278.5px" width="15.2" height="14" viewBox="0 0 15.2 14"><path d="M0.7 4 Q0.7 3 1.6 3 H5.4 V9 L1.4 13 H0.7 Z" fill="#fdf3d0" stroke="#c8983c" stroke-width="0.9"/><path d="M4.6 8.6 H14.6 L10.8 13.3 H0.9 Z" fill="#f9cd6e" stroke="#c08a2c" stroke-width="0.9" stroke-linejoin="round"/><path d="M2.4 12.4 L5 9.6 H12.4" fill="none" stroke="#fde9b0" stroke-width="0.8"/><path d="M5 7.6 V5.4 A5 5.2 0 0 1 15 5.4 V7.6 Z" fill="#2c69ba"/><path d="M5 5.6 H15 V7.7 H5 Z" fill="#5d9be2"/><path d="M6.4 3.4 A3.8 3.6 0 0 1 13.6 3.4" fill="none" stroke="#7fb2ea" stroke-width="0.7"/></svg>
<span class="t" style="left:1331.5px;top:278.10px;letter-spacing:-0.839px;">I_A</span>
<span class="t" style="left:1457px;top:278.10px;letter-spacing:-0.152px;">struct M...</span>
<span class="t" style="left:1515.5px;top:278.10px;letter-spacing:-0.162px;">{value=[-0.0314865112...</span>
<div style="left:1512.5px;top:294.0px;width:134.5px;height:17.6px;background:#ffff00;"></div>
<svg style="left:1315.5px;top:301.3px" width="10" height="7" viewBox="0 0 10 7"><path d="M1 1 L5 5 L9 1" fill="none" stroke="#242424" stroke-width="1.9"/></svg>
<svg style="left:1329.5px;top:296.0px" width="15.2" height="14" viewBox="0 0 15.2 14"><path d="M0.7 4 Q0.7 3 1.6 3 H5.4 V9 L1.4 13 H0.7 Z" fill="#fdf3d0" stroke="#c8983c" stroke-width="0.9"/><path d="M4.6 8.6 H14.6 L10.8 13.3 H0.9 Z" fill="#f9cd6e" stroke="#c08a2c" stroke-width="0.9" stroke-linejoin="round"/><path d="M2.4 12.4 L5 9.6 H12.4" fill="none" stroke="#fde9b0" stroke-width="0.8"/><path d="M5 7.6 V5.4 A5 5.2 0 0 1 15 5.4 V7.6 Z" fill="#2c69ba"/><path d="M5 5.6 H15 V7.7 H5 Z" fill="#5d9be2"/><path d="M6.4 3.4 A3.8 3.6 0 0 1 13.6 3.4" fill="none" stroke="#7fb2ea" stroke-width="0.7"/></svg>
<span class="t" style="left:1347.5px;top:295.60px;letter-spacing:-0.037px;">value</span>
<span class="t" style="left:1457px;top:295.60px;letter-spacing:0.184px;">float[3]</span>
<span class="t" style="left:1515.5px;top:295.60px;letter-spacing:-0.214px;">[-0.000105232,0.00589...</span>
<div style="left:1512.5px;top:311.5px;width:134.5px;height:17.6px;background:#ffff00;"></div>
<svg style="left:1345.5px;top:314.5px" width="16" height="12" viewBox="0 0 16 12"><text x="0" y="9.2" font-family="Liberation Sans, sans-serif" font-weight="bold" font-size="10.6" fill="#324a74" stroke="#324a74" stroke-width="0.35" textLength="11.8" lengthAdjust="spacingAndGlyphs">(x)</text><text x="12.1" y="8.4" font-family="Liberation Sans, sans-serif" font-weight="bold" font-size="7.4" fill="#7b90b4" textLength="3.2" lengthAdjust="spacingAndGlyphs">=</text></svg>
<span class="t" style="left:1363.5px;top:313.10px;letter-spacing:-0.281px;">[0]</span>
<span class="t" style="left:1457px;top:313.10px;letter-spacing:0.163px;">float</span>
<span class="t" style="left:1515.5px;top:313.10px;letter-spacing:-0.263px;">0.00881004333</span>
<div style="left:1512.5px;top:329.0px;width:134.5px;height:17.6px;background:#ffff00;"></div>
<svg style="left:1345.5px;top:332.0px" width="16" height="12" viewBox="0 0 16 12"><text x="0" y="9.2" font-family="Liberation Sans, sans-serif" font-weight="bold" font-size="10.6" fill="#324a74" stroke="#324a74" stroke-width="0.35" textLength="11.8" lengthAdjust="spacingAndGlyphs">(x)</text><text x="12.1" y="8.4" font-family="Liberation Sans, sans-serif" font-weight="bold" font-size="7.4" fill="#7b90b4" textLength="3.2" lengthAdjust="spacingAndGlyphs">=</text></svg>
<span class="t" style="left:1363.5px;top:330.60px;letter-spacing:-0.281px;">[1]</span>
<span class="t" style="left:1457px;top:330.60px;letter-spacing:0.163px;">float</span>
<span class="t" style="left:1515.5px;top:330.60px;letter-spacing:-0.234px;">0.010383606</span>
<div style="left:1512.5px;top:346.5px;width:134.5px;height:17.6px;background:#ffff00;"></div>
<svg style="left:1345.5px;top:349.5px" width="16" height="12" viewBox="0 0 16 12"><text x="0" y="9.2" font-family="Liberation Sans, sans-serif" font-weight="bold" font-size="10.6" fill="#324a74" stroke="#324a74" stroke-width="0.35" textLength="11.8" lengthAdjust="spacingAndGlyphs">(x)</text><text x="12.1" y="8.4" font-family="Liberation Sans, sans-serif" font-weight="bold" font-size="7.4" fill="#7b90b4" textLength="3.2" lengthAdjust="spacingAndGlyphs">=</text></svg>
<span class="t" style="left:1363.5px;top:348.10px;letter-spacing:-0.281px;">[2]</span>
<span class="t" style="left:1457px;top:348.10px;letter-spacing:0.163px;">float</span>
<span class="t" style="left:1515.5px;top:348.10px;letter-spacing:-0.229px;">0.0389156342</span>
<div style="left:1512.5px;top:364.0px;width:134.5px;height:17.6px;background:#ffff00;"></div>
<svg style="left:1299.5px;top:371.3px" width="10" height="7" viewBox="0 0 10 7"><path d="M1 1 L5 5 L9 1" fill="none" stroke="#242424" stroke-width="1.9"/></svg>
<svg style="left:1313.5px;top:366.0px" width="15.2" height="14" viewBox="0 0 15.2 14"><path d="M0.7 4 Q0.7 3 1.6 3 H5.4 V9 L1.4 13 H0.7 Z" fill="#fdf3d0" stroke="#c8983c" stroke-width="0.9"/><path d="M4.6 8.6 H14.6 L10.8 13.3 H0.9 Z" fill="#f9cd6e" stroke="#c08a2c" stroke-width="0.9" stroke-linejoin="round"/><path d="M2.4 12.4 L5 9.6 H12.4" fill="none" stroke="#fde9b0" stroke-width="0.8"/><path d="M5 7.6 V5.4 A5 5.2 0 0 1 15 5.4 V7.6 Z" fill="#2c69ba"/><path d="M5 5.6 H15 V7.7 H5 Z" fill="#5d9be2"/><path d="M6.4 3.4 A3.8 3.6 0 0 1 13.6 3.4" fill="none" stroke="#7fb2ea" stroke-width="0.7"/></svg>
<span class="t" style="left:1331.5px;top:365.60px;letter-spacing:-1.062px;">V_V</span>
<span class="t" style="left:1457px;top:365.60px;letter-spacing:-0.152px;">struct M...</span>
<span class="t" style="left:1515.5px;top:365.60px;letter-spacing:-0.217px;">{value=[-57.1849289,-5...</span>
<div style="left:1512.5px;top:381.5px;width:134.5px;height:17.6px;background:#ffff00;"></div>
<svg style="left:1315.5px;top:388.8px" width="10" height="7" viewBox="0 0 10 7"><path d="M1 1 L5 5 L9 1" fill="none" stroke="#242424" stroke-width="1.9"/></svg>
<svg style="left:1329.5px;top:383.5px" width="15.2" height="14" viewBox="0 0 15.2 14"><path d="M0.7 4 Q0.7 3 1.6 3 H5.4 V9 L1.4 13 H0.7 Z" fill="#fdf3d0" stroke="#c8983c" stroke-width="0.9"/><path d="M4.6 8.6 H14.6 L10.8 13.3 H0.9 Z" fill="#f9cd6e" stroke="#c08a2c" stroke-width="0.9" stroke-linejoin="round"/><path d="M2.4 12.4 L5 9.6 H12.4" fill="none" stroke="#fde9b0" stroke-width="0.8"/><path d="M5 7.6 V5.4 A5 5.2 0 0 1 15 5.4 V7.6 Z" fill="#2c69ba"/><path d="M5 5.6 H15 V7.7 H5 Z" fill="#5d9be2"/><path d="M6.4 3.4 A3.8 3.6 0 0 1 13.6 3.4" fill="none" stroke="#7fb2ea" stroke-width="0.7"/></svg>
<span class="t" style="left:1347.5px;top:383.10px;letter-spacing:-0.037px;">value</span>
<span class="t" style="left:1457px;top:383.10px;letter-spacing:0.184px;">float[3]</span>
<span class="t" style="left:1515.5px;top:383.10px;letter-spacing:-0.102px;">[-57.0552063,-55.3960...</span>
<div style="left:1512.5px;top:399.0px;width:134.5px;height:17.6px;background:#ffff00;"></div>
<svg style="left:1345.5px;top:402.0px" width="16" height="12" viewBox="0 0 16 12"><text x="0" y="9.2" font-family="Liberation Sans, sans-serif" font-weight="bold" font-size="10.6" fill="#324a74" stroke="#324a74" stroke-width="0.35" textLength="11.8" lengthAdjust="spacingAndGlyphs">(x)</text><text x="12.1" y="8.4" font-family="Liberation Sans, sans-serif" font-weight="bold" font-size="7.4" fill="#7b90b4" textLength="3.2" lengthAdjust="spacingAndGlyphs">=</text></svg>
<span class="t" style="left:1363.5px;top:400.60px;letter-spacing:-0.281px;">[0]</span>
<span class="t" style="left:1457px;top:400.60px;letter-spacing:0.163px;">float</span>
<span class="t" style="left:1515.5px;top:400.60px;letter-spacing:-0.173px;">-56.9678192</span>
<div style="left:1512.5px;top:416.5px;width:134.5px;height:17.6px;background:#ffff00;"></div>
<svg style="left:1345.5px;top:419.5px" width="16" height="12" viewBox="0 0 16 12"><text x="0" y="9.2" font-family="Liberation Sans, sans-serif" font-weight="bold" font-size="10.6" fill="#324a74" stroke="#324a74" stroke-width="0.35" textLength="11.8" lengthAdjust="spacingAndGlyphs">(x)</text><text x="12.1" y="8.4" font-family="Liberation Sans, sans-serif" font-weight="bold" font-size="7.4" fill="#7b90b4" textLength="3.2" lengthAdjust="spacingAndGlyphs">=</text></svg>
<span class="t" style="left:1363.5px;top:418.10px;letter-spacing:-0.281px;">[1]</span>
<span class="t" style="left:1457px;top:418.10px;letter-spacing:0.163px;">float</span>
<span class="t" style="left:1515.5px;top:418.10px;letter-spacing:-0.223px;">-57.201828</span>
<div style="left:1512.5px;top:434.0px;width:134.5px;height:17.6px;background:#ffff00;"></div>
<svg style="left:1345.5px;top:437.0px" width="16" height="12" viewBox="0 0 16 12"><text x="0" y="9.2" font-family="Liberation Sans, sans-serif" font-weight="bold" font-size="10.6" fill="#324a74" stroke="#324a74" stroke-width="0.35" textLength="11.8" lengthAdjust="spacingAndGlyphs">(x)</text><text x="12.1" y="8.4" font-family="Liberation Sans, sans-serif" font-weight="bold" font-size="7.4" fill="#7b90b4" textLength="3.2" lengthAdjust="spacingAndGlyphs">=</text></svg>
<span class="t" style="left:1363.5px;top:435.60px;letter-spacing:-0.281px;">[2]</span>
<span class="t" style="left:1457px;top:435.60px;letter-spacing:0.163px;">float</span>
<span class="t" style="left:1515.5px;top:435.60px;letter-spacing:-0.173px;">-56.8618927</span>
<div style="left:1512.5px;top:451.5px;width:134.5px;height:17px;background:#ffff00;"></div>
<svg style="left:1313.5px;top:454.5px" width="16" height="12" viewBox="0 0 16 12"><text x="0" y="9.2" font-family="Liberation Sans, sans-serif" font-weight="bold" font-size="10.6" fill="#324a74" stroke="#324a74" stroke-width="0.35" textLength="11.8" lengthAdjust="spacingAndGlyphs">(x)</text><text x="12.1" y="8.4" font-family="Liberation Sans, sans-serif" font-weight="bold" font-size="7.4" fill="#7b90b4" textLength="3.2" lengthAdjust="spacingAndGlyphs">=</text></svg>
<span class="t" style="left:1331.5px;top:453.10px;letter-spacing:-0.647px;">dcBus_V</span>
<span class="t" style="left:1457px;top:453.10px;letter-spacing:0.163px;">float</span>
<span class="t" style="left:1515.5px;top:453.10px;letter-spacing:-0.291px;">133.417969</span>
<svg style="left:1313.5px;top:472.0px" width="16" height="12" viewBox="0 0 16 12"><text x="0" y="9.2" font-family="Liberation Sans, sans-serif" font-weight="bold" font-size="10.6" fill="#324a74" stroke="#324a74" stroke-width="0.35" textLength="11.8" lengthAdjust="spacingAndGlyphs">(x)</text><text x="12.1" y="8.4" font-family="Liberation Sans, sans-serif" font-weight="bold" font-size="7.4" fill="#7b90b4" textLength="3.2" lengthAdjust="spacingAndGlyphs">=</text></svg>
<span class="t" style="left:1331.5px;top:470.60px;letter-spacing:0.414px;">throttle</span>
<span class="t" style="left:1457px;top:470.60px;letter-spacing:0.163px;">float</span>
<span class="t" style="left:1515.5px;top:470.60px;letter-spacing:-0.562px;">0.0</span>
<svg style="left:1297.5px;top:489.5px" width="16" height="12" viewBox="0 0 16 12"><text x="0" y="9.2" font-family="Liberation Sans, sans-serif" font-weight="bold" font-size="10.6" fill="#324a74" stroke="#324a74" stroke-width="0.35" textLength="11.8" lengthAdjust="spacingAndGlyphs">(x)</text><text x="12.1" y="8.4" font-family="Liberation Sans, sans-serif" font-weight="bold" font-size="7.4" fill="#7b90b4" textLength="3.2" lengthAdjust="spacingAndGlyphs">=</text></svg>
<span class="t" style="left:1315.5px;top:488.10px;letter-spacing:-0.220px;">IdqSet_A.value[0]</span>
<span class="t" style="left:1457px;top:488.10px;letter-spacing:0.163px;">float</span>
<span class="t" style="left:1515.5px;top:488.10px;letter-spacing:-0.562px;">0.0</span>
<svg style="left:1297.5px;top:507.0px" width="16" height="12" viewBox="0 0 16 12"><text x="0" y="9.2" font-family="Liberation Sans, sans-serif" font-weight="bold" font-size="10.6" fill="#324a74" stroke="#324a74" stroke-width="0.35" textLength="11.8" lengthAdjust="spacingAndGlyphs">(x)</text><text x="12.1" y="8.4" font-family="Liberation Sans, sans-serif" font-weight="bold" font-size="7.4" fill="#7b90b4" textLength="3.2" lengthAdjust="spacingAndGlyphs">=</text></svg>
<span class="t" style="left:1315.5px;top:505.60px;letter-spacing:-0.220px;">IdqSet_A.value[1]</span>
<span class="t" style="left:1457px;top:505.60px;letter-spacing:0.163px;">float</span>
<span class="t" style="left:1515.5px;top:505.60px;letter-spacing:-0.465px;">0.75</span>
<svg style="left:1297.5px;top:524.5px" width="16" height="12" viewBox="0 0 16 12"><text x="0" y="9.2" font-family="Liberation Sans, sans-serif" font-weight="bold" font-size="10.6" fill="#324a74" stroke="#324a74" stroke-width="0.35" textLength="11.8" lengthAdjust="spacingAndGlyphs">(x)</text><text x="12.1" y="8.4" font-family="Liberation Sans, sans-serif" font-weight="bold" font-size="7.4" fill="#7b90b4" textLength="3.2" lengthAdjust="spacingAndGlyphs">=</text></svg>
<span class="t" style="left:1315.5px;top:523.10px;letter-spacing:-0.195px;">Idq_A.value[1]</span>
<span class="t" style="left:1457px;top:523.10px;letter-spacing:0.136px;">unknown</span>
<span class="t" style="left:1515.5px;top:523.10px;color:#d8181f;letter-spacing:0.133px;">identifier not found: Id...</span>
<div style="left:1512.5px;top:539.0px;width:134.5px;height:17px;background:#ffff00;"></div>
<svg style="left:1285.1px;top:543.9px" width="7" height="9.4" viewBox="0 0 7 9.4"><path d="M1.2 1 L5 4.6 L1.2 8.2" fill="none" stroke="#858585" stroke-width="1.7"/></svg>
<svg style="left:1297.5px;top:541.0px" width="15.2" height="14" viewBox="0 0 15.2 14"><path d="M0.7 4 Q0.7 3 1.6 3 H5.4 V9 L1.4 13 H0.7 Z" fill="#fdf3d0" stroke="#c8983c" stroke-width="0.9"/><path d="M4.6 8.6 H14.6 L10.8 13.3 H0.9 Z" fill="#f9cd6e" stroke="#c08a2c" stroke-width="0.9" stroke-linejoin="round"/><path d="M2.4 12.4 L5 9.6 H12.4" fill="none" stroke="#fde9b0" stroke-width="0.8"/><path d="M5 7.6 V5.4 A5 5.2 0 0 1 15 5.4 V7.6 Z" fill="#2c69ba"/><path d="M5 5.6 H15 V7.7 H5 Z" fill="#5d9be2"/><path d="M6.4 3.4 A3.8 3.6 0 0 1 13.6 3.4" fill="none" stroke="#7fb2ea" stroke-width="0.7"/></svg>
<span class="t" style="left:1315.5px;top:540.60px;">estInputData</span>
<span class="t" style="left:1457px;top:540.60px;letter-spacing:-0.474px;">struct ES...</span>
<span class="t" style="left:1515.5px;top:540.60px;letter-spacing:-0.077px;">{timeStamp=0,Iab_A={...</span>
<svg style="left:1285.1px;top:561.4px" width="7" height="9.4" viewBox="0 0 7 9.4"><path d="M1.2 1 L5 4.6 L1.2 8.2" fill="none" stroke="#858585" stroke-width="1.7"/></svg>
<svg style="left:1297.5px;top:558.5px" width="15.2" height="14" viewBox="0 0 15.2 14"><path d="M0.7 4 Q0.7 3 1.6 3 H5.4 V9 L1.4 13 H0.7 Z" fill="#fdf3d0" stroke="#c8983c" stroke-width="0.9"/><path d="M4.6 8.6 H14.6 L10.8 13.3 H0.9 Z" fill="#f9cd6e" stroke="#c08a2c" stroke-width="0.9" stroke-linejoin="round"/><path d="M2.4 12.4 L5 9.6 H12.4" fill="none" stroke="#fde9b0" stroke-width="0.8"/><path d="M5 7.6 V5.4 A5 5.2 0 0 1 15 5.4 V7.6 Z" fill="#2c69ba"/><path d="M5 5.6 H15 V7.7 H5 Z" fill="#5d9be2"/><path d="M6.4 3.4 A3.8 3.6 0 0 1 13.6 3.4" fill="none" stroke="#7fb2ea" stroke-width="0.7"/></svg>
<span class="t" style="left:1315.5px;top:558.10px;letter-spacing:0.047px;">estOutputData</span>
<span class="t" style="left:1457px;top:558.10px;letter-spacing:-0.474px;">struct ES...</span>
<span class="t" style="left:1515.5px;top:558.10px;letter-spacing:-0.254px;">{timeStamp=0,angle_ra...</span>
<svg style="left:1285.1px;top:578.9px" width="7" height="9.4" viewBox="0 0 7 9.4"><path d="M1.2 1 L5 4.6 L1.2 8.2" fill="none" stroke="#858585" stroke-width="1.7"/></svg>
<svg style="left:1297.5px;top:576.0px" width="15.2" height="14" viewBox="0 0 15.2 14"><path d="M0.7 4 Q0.7 3 1.6 3 H5.4 V9 L1.4 13 H0.7 Z" fill="#fdf3d0" stroke="#c8983c" stroke-width="0.9"/><path d="M4.6 8.6 H14.6 L10.8 13.3 H0.9 Z" fill="#f9cd6e" stroke="#c08a2c" stroke-width="0.9" stroke-linejoin="round"/><path d="M2.4 12.4 L5 9.6 H12.4" fill="none" stroke="#fde9b0" stroke-width="0.8"/><path d="M5 7.6 V5.4 A5 5.2 0 0 1 15 5.4 V7.6 Z" fill="#2c69ba"/><path d="M5 5.6 H15 V7.7 H5 Z" fill="#5d9be2"/><path d="M6.4 3.4 A3.8 3.6 0 0 1 13.6 3.4" fill="none" stroke="#7fb2ea" stroke-width="0.7"/></svg>
<span class="t" style="left:1315.5px;top:575.60px;letter-spacing:-0.283px;">Idq_ref_A</span>
<span class="t" style="left:1457px;top:575.60px;letter-spacing:-0.152px;">struct M...</span>
<span class="t" style="left:1515.5px;top:575.60px;letter-spacing:-0.063px;">{value=[0.0,0.0]}</span>
<div style="left:1512.5px;top:591.5px;width:134.5px;height:17.6px;background:#ffff00;"></div>
<svg style="left:1285.1px;top:596.4px" width="7" height="9.4" viewBox="0 0 7 9.4"><path d="M1.2 1 L5 4.6 L1.2 8.2" fill="none" stroke="#858585" stroke-width="1.7"/></svg>
<svg style="left:1297.5px;top:593.5px" width="15.2" height="14" viewBox="0 0 15.2 14"><path d="M0.7 4 Q0.7 3 1.6 3 H5.4 V9 L1.4 13 H0.7 Z" fill="#fdf3d0" stroke="#c8983c" stroke-width="0.9"/><path d="M4.6 8.6 H14.6 L10.8 13.3 H0.9 Z" fill="#f9cd6e" stroke="#c08a2c" stroke-width="0.9" stroke-linejoin="round"/><path d="M2.4 12.4 L5 9.6 H12.4" fill="none" stroke="#fde9b0" stroke-width="0.8"/><path d="M5 7.6 V5.4 A5 5.2 0 0 1 15 5.4 V7.6 Z" fill="#2c69ba"/><path d="M5 5.6 H15 V7.7 H5 Z" fill="#5d9be2"/><path d="M6.4 3.4 A3.8 3.6 0 0 1 13.6 3.4" fill="none" stroke="#7fb2ea" stroke-width="0.7"/></svg>
<span class="t" style="left:1315.5px;top:593.10px;letter-spacing:-0.422px;">Idq_in_A</span>
<span class="t" style="left:1457px;top:593.10px;letter-spacing:-0.152px;">struct M...</span>
<span class="t" style="left:1515.5px;top:593.10px;letter-spacing:-0.172px;">{value=[0.0223007202,...</span>
<div style="left:1512.5px;top:609.0px;width:134.5px;height:17px;background:#ffff00;"></div>
<svg style="left:1285.1px;top:613.9px" width="7" height="9.4" viewBox="0 0 7 9.4"><path d="M1.2 1 L5 4.6 L1.2 8.2" fill="none" stroke="#858585" stroke-width="1.7"/></svg>
<svg style="left:1297.5px;top:611.0px" width="15.2" height="14" viewBox="0 0 15.2 14"><path d="M0.7 4 Q0.7 3 1.6 3 H5.4 V9 L1.4 13 H0.7 Z" fill="#fdf3d0" stroke="#c8983c" stroke-width="0.9"/><path d="M4.6 8.6 H14.6 L10.8 13.3 H0.9 Z" fill="#f9cd6e" stroke="#c08a2c" stroke-width="0.9" stroke-linejoin="round"/><path d="M2.4 12.4 L5 9.6 H12.4" fill="none" stroke="#fde9b0" stroke-width="0.8"/><path d="M5 7.6 V5.4 A5 5.2 0 0 1 15 5.4 V7.6 Z" fill="#2c69ba"/><path d="M5 5.6 H15 V7.7 H5 Z" fill="#5d9be2"/><path d="M6.4 3.4 A3.8 3.6 0 0 1 13.6 3.4" fill="none" stroke="#7fb2ea" stroke-width="0.7"/></svg>
<span class="t" style="left:1315.5px;top:610.60px;letter-spacing:-0.266px;">Vdq_out_V</span>
<span class="t" style="left:1457px;top:610.60px;letter-spacing:-0.152px;">struct M...</span>
<span class="t" style="left:1515.5px;top:610.60px;letter-spacing:-0.061px;">{value=[-3.30248737,1...</span>
<div style="left:1673px;top:119px;width:18px;height:509px;background:#f0f0f0;"></div>
<div style="left:1674px;top:382px;width:15.5px;height:195px;background:#cdcdcd;"></div>
<svg style="left:1678.0px;top:124px" width="8" height="6.4" viewBox="0 0 8 6.4"><path d="M1 4.8 L4 1.6 L7 4.8" fill="none" stroke="#505050" stroke-width="1.5"/></svg>
<svg style="left:1678.0px;top:616px" width="8" height="6.4" viewBox="0 0 8 6.4"><path d="M1 1.4 L4 4.6 L7 1.4" fill="none" stroke="#505050" stroke-width="1.5"/></svg>
<div style="left:1282px;top:628px;width:409px;height:17.5px;background:#f0f0f0;"></div>
<div style="left:1296.5px;top:629px;width:334.0px;height:15.5px;background:#cdcdcd;"></div>
<svg style="left:1285.0px;top:633px" width="6.4" height="8" viewBox="0 0 6.4 8"><path d="M4.8 1 L1.6 4 L4.8 7" fill="none" stroke="#505050" stroke-width="1.5"/></svg>
<svg style="left:1660px;top:633px" width="6.4" height="8" viewBox="0 0 6.4 8"><path d="M1.4 1 L4.6 4 L1.4 7" fill="none" stroke="#505050" stroke-width="1.5"/></svg>
</section>
<section aria-label="Highlight annotations" style="left:0;top:0">
<div class="red" style="left:41px;top:260px;width:661px;height:164px"></div>
<div class="red" style="left:863px;top:241px;width:377px;height:189.5px"></div>
<div class="red" style="left:1275px;top:257px;width:383px;height:226px"></div>
</section>
</div>
</body></html>
